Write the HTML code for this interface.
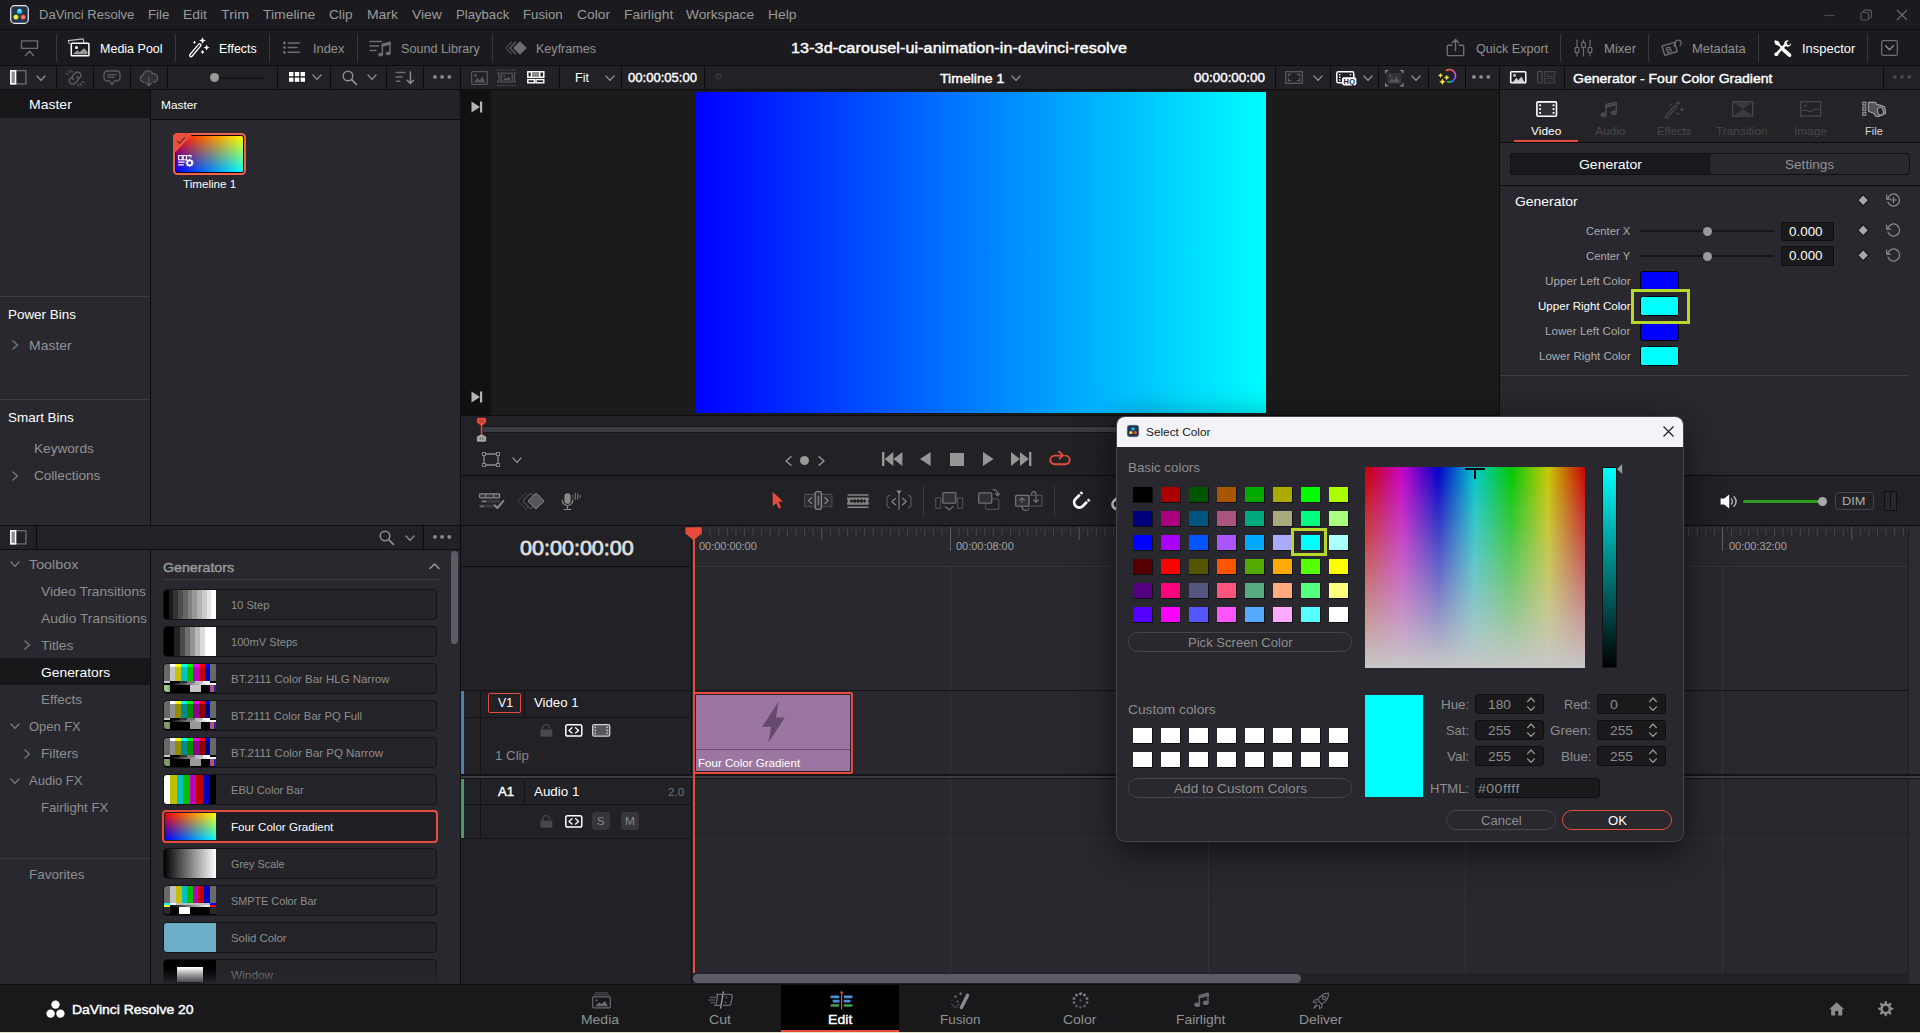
<!DOCTYPE html>
<html lang="en"><head><meta charset="utf-8"><title>DaVinci Resolve - Select Color</title>
<style>
html,body{margin:0;padding:0;background:#28282e;overflow:hidden}
#app{position:relative;width:1920px;height:1033px;overflow:hidden;background:#28282e;font-family:"Liberation Sans", sans-serif;}
#app div,#app svg{position:absolute}
#app svg{overflow:visible}
.t{white-space:pre}
</style></head><body><div id="app">
<div style="left:0px;top:0px;width:1920px;height:30px;background:#1b1b1f;"></div>
<div style="left:0px;top:29px;width:1920px;height:1px;background:#0d0d0f;"></div>
<div style="left:0px;top:30px;width:1920px;height:36px;background:#1b1b1f;"></div>
<div style="left:0px;top:65px;width:1920px;height:1px;background:#0d0d0f;"></div>
<div style="left:0px;top:66px;width:1920px;height:24px;background:#212126;"></div>
<div style="left:0px;top:89px;width:1920px;height:1px;background:#0d0d0f;"></div>
<div style="left:0px;top:90px;width:150px;height:436px;background:#28282e;"></div>
<div style="left:0px;top:90px;width:150px;height:28px;background:#17171a;"></div>
<div style="left:150px;top:90px;width:1px;height:436px;background:#0d0d0f;"></div>
<div style="left:151px;top:90px;width:309px;height:29px;background:#222227;"></div>
<div style="left:151px;top:119px;width:309px;height:1px;background:#0d0d0f;"></div>
<div style="left:151px;top:120px;width:309px;height:406px;background:#28282e;"></div>
<div style="left:0px;top:296px;width:150px;height:1px;background:#3c3c44;"></div>
<div style="left:0px;top:399px;width:150px;height:1px;background:#3c3c44;"></div>
<div style="left:460px;top:66px;width:1px;height:918px;background:#0d0d0f;"></div>
<div style="left:461px;top:90px;width:1038px;height:326px;background:#1b1b1c;"></div>
<div style="left:461px;top:90px;width:30px;height:326px;background:#111112;"></div>
<div style="left:695px;top:92px;width:571px;height:321px;background:linear-gradient(90deg,#0000ff 0%,#00ffff 100%);"></div>
<div style="left:461px;top:416px;width:1038px;height:60px;background:#212126;"></div>
<div style="left:461px;top:415px;width:1038px;height:1px;background:#0d0d0f;"></div>
<div style="left:461px;top:475px;width:1459px;height:1px;background:#0d0d0f;"></div>
<div style="left:1499px;top:66px;width:1px;height:410px;background:#0d0d0f;"></div>
<div style="left:1500px;top:90px;width:420px;height:385px;background:#28282e;"></div>
<div style="left:1500px;top:142px;width:420px;height:1px;background:#0d0d0f;"></div>
<div style="left:1500px;top:185px;width:420px;height:1px;background:#0d0d0f;"></div>
<div style="left:1500px;top:375px;width:409px;height:1px;background:#3c3c44;"></div>
<div style="left:461px;top:476px;width:1459px;height:50px;background:#212126;"></div>
<div style="left:461px;top:525px;width:1459px;height:1px;background:#0d0d0f;"></div>
<div style="left:0px;top:525px;width:460px;height:1px;background:#0d0d0f;"></div>
<div style="left:0px;top:526px;width:460px;height:23px;background:#212126;"></div>
<div style="left:0px;top:549px;width:460px;height:1px;background:#0d0d0f;"></div>
<div style="left:0px;top:550px;width:150px;height:434px;background:#28282e;"></div>
<div style="left:150px;top:550px;width:1px;height:434px;background:#0d0d0f;"></div>
<div style="left:151px;top:550px;width:309px;height:434px;background:#28282e;"></div>
<div style="left:0px;top:658px;width:150px;height:27px;background:#17171a;"></div>
<div style="left:0px;top:858px;width:150px;height:1px;background:#3c3c44;"></div>
<div style="left:461px;top:526px;width:1459px;height:458px;background:#28282e;"></div>
<div style="left:461px;top:526px;width:231px;height:458px;background:#212126;"></div>
<div style="left:691px;top:526px;width:1px;height:458px;background:#0d0d0f;"></div>
<svg style="left:10px;top:5px;" width="19" height="19" viewBox="0 0 20 20"><rect x="0.75" y="0.75" width="18.5" height="18.5" rx="4" fill="#22344d" stroke="#e8e8e8" stroke-width="1.3"/>
<circle cx="10" cy="6.6" r="2.7" fill="#19c3f2"/><circle cx="10" cy="5.6" r="1.5" fill="#7fe6ff"/>
<circle cx="6.3" cy="12.6" r="2.7" fill="#d9d62a"/><circle cx="5.8" cy="12.9" r="1.5" fill="#f4f05c"/>
<circle cx="13.7" cy="12.6" r="2.7" fill="#e8473a"/><circle cx="14.2" cy="12.9" r="1.5" fill="#ff8b7d"/></svg>
<svg style="left:1824px;top:9px;" width="12" height="12" viewBox="0 0 12 12"><path d="M0.5 6.5H10.5" stroke="#4a4a50" stroke-width="1.2" fill="none"/></svg>
<svg style="left:1860px;top:9px;" width="12" height="12" viewBox="0 0 12 12"><rect x="1" y="3.5" width="7.5" height="7.5" rx="1.5" fill="none" stroke="#55555b" stroke-width="1.2"/><path d="M3.5 3.2V2.6a1.5 1.5 0 0 1 1.5-1.5H9.9a1.5 1.5 0 0 1 1.5 1.5V7.5a1.5 1.5 0 0 1-1.5 1.5H9" fill="none" stroke="#55555b" stroke-width="1.2"/></svg>
<svg style="left:1896px;top:9px;" width="12" height="12" viewBox="0 0 12 12"><path d="M1 1L11 11M11 1L1 11" stroke="#6a6a70" stroke-width="1.2" fill="none"/></svg>
<div style="left:56px;top:34px;width:1px;height:28px;background:#37373d;"></div>
<div style="left:175px;top:34px;width:1px;height:28px;background:#37373d;"></div>
<div style="left:269px;top:34px;width:1px;height:28px;background:#37373d;"></div>
<div style="left:357px;top:34px;width:1px;height:28px;background:#37373d;"></div>
<div style="left:492px;top:34px;width:1px;height:28px;background:#37373d;"></div>
<div style="left:1560px;top:34px;width:1px;height:28px;background:#37373d;"></div>
<div style="left:1648px;top:34px;width:1px;height:28px;background:#37373d;"></div>
<div style="left:1758px;top:34px;width:1px;height:28px;background:#37373d;"></div>
<div style="left:1867px;top:34px;width:1px;height:28px;background:#37373d;"></div>
<div style="left:56px;top:66px;width:1px;height:23px;background:#0d0d0f;"></div>
<div style="left:93px;top:66px;width:1px;height:23px;background:#0d0d0f;"></div>
<div style="left:130px;top:66px;width:1px;height:23px;background:#0d0d0f;"></div>
<div style="left:167px;top:66px;width:1px;height:23px;background:#0d0d0f;"></div>
<div style="left:277px;top:66px;width:1px;height:23px;background:#0d0d0f;"></div>
<div style="left:330px;top:66px;width:1px;height:23px;background:#0d0d0f;"></div>
<div style="left:386px;top:66px;width:1px;height:23px;background:#0d0d0f;"></div>
<div style="left:423px;top:66px;width:1px;height:23px;background:#0d0d0f;"></div>
<div style="left:559px;top:66px;width:1px;height:23px;background:#0d0d0f;"></div>
<div style="left:621px;top:66px;width:1px;height:23px;background:#0d0d0f;"></div>
<div style="left:704px;top:66px;width:1px;height:23px;background:#0d0d0f;"></div>
<div style="left:1330px;top:66px;width:1px;height:23px;background:#0d0d0f;"></div>
<div style="left:1378px;top:66px;width:1px;height:23px;background:#0d0d0f;"></div>
<div style="left:1428px;top:66px;width:1px;height:23px;background:#0d0d0f;"></div>
<div style="left:1465px;top:66px;width:1px;height:23px;background:#0d0d0f;"></div>
<div style="left:1564px;top:66px;width:1px;height:23px;background:#0d0d0f;"></div>
<div style="left:1883px;top:66px;width:1px;height:23px;background:#0d0d0f;"></div>
<svg style="left:20px;top:39px;" width="20" height="18" viewBox="0 0 20 18"><path d="M1.5 1.8H17.5V9.3H1.5Z" stroke="#6e6e6e" stroke-width="1.3" fill="none" stroke-linecap="round" stroke-linejoin="round" /><path d="M5.5 16.5L9.5 12.3L13.5 16.5" stroke="#6e6e6e" stroke-width="1.5" fill="none" stroke-linecap="round" stroke-linejoin="round" /></svg>
<svg style="left:67px;top:38px;" width="24" height="19" viewBox="0 0 24 19"><path d="M2.2 5.6L1.3 2.6L16.2 0.9L16.9 4.4" stroke="#bdbdbd" stroke-width="1.1" fill="none" stroke-linecap="round" stroke-linejoin="round" /><rect x="4.3" y="5.3" width="17.6" height="12.4" rx="0.8" fill="#1b1b1f" stroke="#ffffff" stroke-width="1.5"/><circle cx="9.5" cy="9.4" r="1.5" fill="#ffffff"/><path d="M6 16.2L10.2 12.3L12.6 14.2L17 10.2L20.4 13.4V16.2Z" fill="#9a9a9a"/></svg>
<svg style="left:188px;top:37px;" width="22" height="22" viewBox="0 0 22 22"><path d="M3 18.4L11.6 8.2" stroke="#ffffff" stroke-width="4" stroke-linecap="round"/><path d="M3 18.4L11.6 8.2" stroke="#1b1b1f" stroke-width="1.4" stroke-linecap="round"/><path d="M14.5 0.20000000000000018L15.52 2.58L17.9 3.6L15.52 4.62L14.5 7.0L13.48 4.62L11.1 3.6L13.48 2.58Z" fill="#ffffff"/><path d="M18.6 7.6L19.5 9.7L21.6 10.6L19.5 11.5L18.6 13.6L17.700000000000003 11.5L15.600000000000001 10.6L17.700000000000003 9.7Z" fill="#ffffff"/><path d="M6.5 3.4L7.07 4.7299999999999995L8.4 5.3L7.07 5.87L6.5 7.199999999999999L5.93 5.87L4.6 5.3L5.93 4.7299999999999995Z" fill="#ffffff"/><path d="M14.5 12.8L15.16 14.34L16.7 15.0L15.16 15.66L14.5 17.2L13.84 15.66L12.3 15.0L13.84 14.34Z" fill="#ffffff"/></svg>
<svg style="left:282px;top:40px;" width="20" height="16" viewBox="0 0 20 16"><circle cx="2.4" cy="3" r="1.4" fill="#6e6e6e"/><circle cx="2.4" cy="7.6" r="1.4" fill="#6e6e6e"/><circle cx="2.4" cy="12.3" r="1.4" fill="#6e6e6e"/><path d="M6.2 3H17.6M6.2 7.6H14.8M6.2 12.3H17.6" stroke="#6e6e6e" stroke-width="1.5" fill="none" stroke-linecap="round" stroke-linejoin="round" /></svg>
<svg style="left:369px;top:39px;" width="24" height="19" viewBox="0 0 24 19"><path d="M1 2.4H12.4M1 7H9.6M1 11.5H7" stroke="#6e6e6e" stroke-width="1.5" fill="none" stroke-linecap="round" stroke-linejoin="round" /><ellipse cx="11.6" cy="15.6" rx="2.4" ry="1.9" fill="#6e6e6e"/><ellipse cx="19.2" cy="14.3" rx="2.4" ry="1.9" fill="#6e6e6e"/><path d="M13.4 15.4V5.2L21 3.2V14" stroke="#6e6e6e" stroke-width="1.5" fill="none" stroke-linecap="round" stroke-linejoin="round" /><path d="M13.4 6.6L21 4.6" stroke="#6e6e6e" stroke-width="2.2" fill="none" stroke-linecap="round" stroke-linejoin="round" /></svg>
<svg style="left:503px;top:40px;" width="26" height="16" viewBox="0 0 26 16"><path d="M8.5 2.2L3 8L8.5 13.8" stroke="#45454a" stroke-width="1.4" fill="none" stroke-linecap="round" stroke-linejoin="round" /><path d="M12.5 2.2L7 8L12.5 13.8" stroke="#5a5a5f" stroke-width="1.4" fill="none" stroke-linecap="round" stroke-linejoin="round" /><path d="M17 1.2L23.8 8L17 14.8L10.2 8Z" fill="#6e6e6e"/></svg>
<svg style="left:1446px;top:38px;" width="20" height="19" viewBox="0 0 20 19"><path d="M6 7.2H2.3a1 1 0 0 0-1 1V16.6a1 1 0 0 0 1 1H16.7a1 1 0 0 0 1-1V8.2a1 1 0 0 0-1-1H13" stroke="#6e6e6e" stroke-width="1.4" fill="none" stroke-linecap="round" stroke-linejoin="round" /><path d="M9.5 12.5V2M6.3 4.8L9.5 1.4L12.7 4.8" stroke="#6e6e6e" stroke-width="1.4" fill="none" stroke-linecap="round" stroke-linejoin="round" /></svg>
<svg style="left:1574px;top:39px;" width="19" height="18" viewBox="0 0 19 18"><path d="M3 1V17" stroke="#6e6e6e" stroke-width="1.2" fill="none" stroke-linecap="round" stroke-linejoin="round" /><path d="M9.5 1V17" stroke="#6e6e6e" stroke-width="1.2" fill="none" stroke-linecap="round" stroke-linejoin="round" /><path d="M16 1V17" stroke="#6e6e6e" stroke-width="1.2" fill="none" stroke-linecap="round" stroke-linejoin="round" /><rect x="1.2" y="8.5" width="3.6" height="5" rx="0.6" fill="#1b1b1f" stroke="#6e6e6e" stroke-width="1.2"/><rect x="7.7" y="3.5" width="3.6" height="5" rx="0.6" fill="#1b1b1f" stroke="#6e6e6e" stroke-width="1.2"/><rect x="14.2" y="8.5" width="3.6" height="5" rx="0.6" fill="#1b1b1f" stroke="#6e6e6e" stroke-width="1.2"/></svg>
<svg style="left:1661px;top:39px;" width="22" height="18" viewBox="0 0 22 18"><path d="M1 7.2L13.5 3.4L16.3 12.5L3.8 16.4Z" stroke="#6e6e6e" stroke-width="1.4" fill="none" stroke-linecap="round" stroke-linejoin="round" /><text x="4.8" y="13.6" font-size="8.5" font-weight="700" fill="#6e6e6e" transform="rotate(-17 8 11)" font-family="Liberation Sans, sans-serif">B</text><path d="M14.5 6.5C13 3.5 15 1 17.6 1.2S21.3 4.6 19 6.6" stroke="#6e6e6e" stroke-width="1.3" fill="none" stroke-linecap="round" stroke-linejoin="round" /><circle cx="13.6" cy="6.6" r="1.2" fill="#6e6e6e"/></svg>
<svg style="left:1773px;top:39px;" width="19" height="18" viewBox="0 0 19 18"><path d="M2.2 1.2L5.8 2.4L7 5.4L10.6 8.6L9 10.2L5.6 6.8L2.6 5.8L1.2 2.2Z" fill="#fff"/><path d="M10.2 10.6L16.6 16.2" stroke="#fff" stroke-width="3.6" stroke-linecap="round"/><path d="M3 15.6L12.4 5.6" stroke="#fff" stroke-width="2.6" stroke-linecap="round"/><path d="M11.2 4.2a3.6 3.6 0 0 1 4.6-2.9L13.6 3.6L14.2 5.6L16.2 6.2L18.2 4a3.6 3.6 0 0 1-4.6 3.6Z" fill="#fff"/><circle cx="3.4" cy="15.2" r="1.9" fill="#fff"/></svg>
<svg style="left:1881px;top:40px;" width="17" height="16" viewBox="0 0 17 16"><rect x="0.7" y="0.7" width="15.6" height="14.6" rx="1.5" fill="none" stroke="#6e6e6e" stroke-width="1.3"/><path d="M4.6 5.8L8.5 9.8L12.4 5.8" stroke="#8c8c8c" stroke-width="1.4" fill="none" stroke-linecap="round" stroke-linejoin="round" /></svg>
<svg style="left:10px;top:70px;" width="17" height="15" viewBox="0 0 17 15"><rect x="0.7" y="0.7" width="15.2" height="13.2" fill="none" stroke="#6e6e6e" stroke-width="1.3"/><rect x="0.8" y="0.8" width="4.8" height="13" fill="#8a8a8a" stroke="#ffffff" stroke-width="1.5"/></svg>
<svg style="left:37.3px;top:75.8px;" width="8" height="4.4" viewBox="0 0 8 4.4"><path d="M0 0L4.0 4.4L8 0" stroke="#8c8c8c" stroke-width="1.4" fill="none" stroke-linecap="round" stroke-linejoin="round" /></svg>
<svg style="left:65px;top:69px;" width="21" height="18" viewBox="0 0 21 18"><path d="M8.2 10.6a3.3 3.3 0 0 1 0-4.6L10.3 3.9a3.3 3.3 0 0 1 4.7 4.6L13.8 9.8" stroke="#5c5c60" stroke-width="1.4" fill="none" stroke-linecap="round" stroke-linejoin="round" /><path d="M12 7.6a3.3 3.3 0 0 1 0 4.6L9.9 14.3a3.3 3.3 0 0 1-4.7-4.6L6.4 8.4" stroke="#5c5c60" stroke-width="1.4" fill="none" stroke-linecap="round" stroke-linejoin="round" /><path d="M3.6 1.6L5 3.4M1.2 4.6L3.4 5.2M6.8 1L7 3M16.6 16.4L15.2 14.6M19 13.4L16.8 12.8M13.4 17L13.2 15" stroke="#5c5c60" stroke-width="1.1" fill="none" stroke-linecap="round" stroke-linejoin="round" /></svg>
<svg style="left:103px;top:70px;" width="18" height="17" viewBox="0 0 18 17"><path d="M4.4 1H13.6a3.4 3.4 0 0 1 3.4 3.4V7.6a3.4 3.4 0 0 1-3.4 3.4H11.4L9 14.8L6.6 11H4.4A3.4 3.4 0 0 1 1 7.6V4.4A3.4 3.4 0 0 1 4.4 1Z" stroke="#5c5c60" stroke-width="1.3" fill="none" stroke-linecap="round" stroke-linejoin="round" /><path d="M4.6 4.6H13.4M4.6 7.2H11" stroke="#5c5c60" stroke-width="1.2" fill="none" stroke-linecap="round" stroke-linejoin="round" /></svg>
<svg style="left:139px;top:69px;" width="20" height="18" viewBox="0 0 20 18"><path d="M5 13.2H4.6a3.6 3.6 0 0 1-.4-7.1A5 5 0 0 1 13.6 4.6a4.3 4.3 0 0 1 1.8 8.4H14.6" stroke="#5c5c60" stroke-width="1.3" fill="#303035" stroke-linecap="round" stroke-linejoin="round" /><path d="M9.8 8V16.4M6.9 13.8L9.8 16.8L12.7 13.8" stroke="#5c5c60" stroke-width="1.3" fill="none" stroke-linecap="round" stroke-linejoin="round" /></svg>
<div style="left:218px;top:77px;width:47px;height:2px;background:#151518;"></div>
<div style="left:209.8px;top:73.2px;width:9px;height:9px;background:#9a9a9a;border-radius:5px;"></div>
<svg style="left:289px;top:72px;" width="16" height="10" viewBox="0 0 16 10"><rect x="0.0" y="0.0" width="4.4" height="4.2" fill="#fff"/><rect x="0.0" y="5.6" width="4.4" height="4.2" fill="#fff"/><rect x="5.8" y="0.0" width="4.4" height="4.2" fill="#fff"/><rect x="5.8" y="5.6" width="4.4" height="4.2" fill="#fff"/><rect x="11.6" y="0.0" width="4.4" height="4.2" fill="#fff"/><rect x="11.6" y="5.6" width="4.4" height="4.2" fill="#fff"/></svg>
<svg style="left:312.8px;top:75.39999999999999px;" width="8" height="4.4" viewBox="0 0 8 4.4"><path d="M0 0L4.0 4.4L8 0" stroke="#8c8c8c" stroke-width="1.4" fill="none" stroke-linecap="round" stroke-linejoin="round" /></svg>
<svg style="left:341.5px;top:70px;" width="16" height="16" viewBox="0 0 16 16"><circle cx="6" cy="6" r="4.8" fill="none" stroke="#8c8c8c" stroke-width="1.5"/><path d="M9.6 9.6L14.4 14.4" stroke="#8c8c8c" stroke-width="1.9" fill="none" stroke-linecap="round" stroke-linejoin="round" /></svg>
<svg style="left:368.4px;top:75.39999999999999px;" width="8" height="4.4" viewBox="0 0 8 4.4"><path d="M0 0L4.0 4.4L8 0" stroke="#8c8c8c" stroke-width="1.4" fill="none" stroke-linecap="round" stroke-linejoin="round" /></svg>
<svg style="left:395px;top:71px;" width="20" height="14" viewBox="0 0 20 14"><path d="M1.2 1.6H10M1.2 6H7.4M1.2 10.2H4.8" stroke="#6e6e6e" stroke-width="1.5" fill="none" stroke-linecap="round" stroke-linejoin="round" /><path d="M15.4 1V12.4M12.2 9.2L15.4 12.6L18.6 9.2" stroke="#8c8c8c" stroke-width="1.5" fill="none" stroke-linecap="round" stroke-linejoin="round" /></svg>
<svg style="left:432.70000000000005px;top:75.3px;" width="18.2" height="3.8" viewBox="0 0 18.2 3.8"><circle cx="1.9" cy="1.9" r="1.9" fill="#8c8c8c"/><circle cx="9.1" cy="1.9" r="1.9" fill="#8c8c8c"/><circle cx="16.3" cy="1.9" r="1.9" fill="#8c8c8c"/></svg>
<svg style="left:12.8px;top:341.3px;" width="4.4" height="8" viewBox="0 0 4.4 8"><path d="M0 0L4.4 4.0L0 8" stroke="#77777c" stroke-width="1.4" fill="none" stroke-linecap="round" stroke-linejoin="round" /></svg>
<svg style="left:12.8px;top:471.5px;" width="4.4" height="8" viewBox="0 0 4.4 8"><path d="M0 0L4.4 4.0L0 8" stroke="#77777c" stroke-width="1.4" fill="none" stroke-linecap="round" stroke-linejoin="round" /></svg>
<div style="left:173px;top:133px;width:73px;height:42px;background:#f5614d;border-radius:4.5px;"></div>
<div style="left:175px;top:135px;width:69px;height:38px;background:#0a0a0a;border-radius:2.5px;"></div>
<div style="left:176px;top:136px;width:67px;height:36px;background:linear-gradient(90deg,#000000,#00ff00),linear-gradient(180deg,#ff0000,#0000ff);border-radius:1.5px;background-blend-mode:screen;"></div>
<svg style="left:173px;top:133px;" width="22" height="21" viewBox="0 0 22 21"><path d="M0 4.5a4.5 4.5 0 0 1 4.5-4.5H20.6L2 19.4H0Z" fill="#e9503f"/><path d="M2 2H18.6L2 19.4Z" fill="#e9503f"/><path d="M4.4 8.2L6.6 10.4L11.6 4.6" stroke="#7a2a22" stroke-width="1.3" fill="none" stroke-linecap="round" stroke-linejoin="round" /></svg>
<svg style="left:177.5px;top:154.6px;" width="17" height="12" viewBox="0 0 17 12"><rect x="0.6" y="0.6" width="3.6" height="4.2" fill="none" stroke="#fff" stroke-width="1.1"/><rect x="5.2" y="0.6" width="3.4" height="4.2" fill="none" stroke="#fff" stroke-width="1.1"/><path d="M9.4 0.6H13V2.4" fill="none" stroke="#fff" stroke-width="1.1"/><path d="M0.2 7.2H6.6M0.2 9.8H5.8" stroke="#fff" stroke-width="1.3"/><circle cx="11.6" cy="7.8" r="2.5" fill="none" stroke="#fff" stroke-width="1.8"/><path d="M11.6 3.8V5M11.6 10.6V11.8M7.6 7.8H8.8M14.4 7.8H15.6M8.8 5L9.7 5.9M13.5 9.7L14.4 10.6M8.8 10.6L9.7 9.7M13.5 5.9L14.4 5" stroke="#fff" stroke-width="1.3"/></svg>
<svg style="left:10px;top:530px;" width="17" height="15" viewBox="0 0 17 15"><rect x="0.7" y="0.7" width="15.2" height="13.2" fill="none" stroke="#6e6e6e" stroke-width="1.3"/><rect x="0.8" y="0.8" width="4.8" height="13" fill="#8a8a8a" stroke="#ffffff" stroke-width="1.5"/></svg>
<div style="left:36px;top:526px;width:1px;height:23px;background:#0d0d0f;"></div>
<svg style="left:378.5px;top:529.5px;" width="16" height="16" viewBox="0 0 16 16"><circle cx="6" cy="6" r="4.8" fill="none" stroke="#8c8c8c" stroke-width="1.5"/><path d="M9.6 9.6L14.4 14.4" stroke="#8c8c8c" stroke-width="1.9" fill="none" stroke-linecap="round" stroke-linejoin="round" /></svg>
<svg style="left:405.5px;top:535.8px;" width="8" height="4.4" viewBox="0 0 8 4.4"><path d="M0 0L4.0 4.4L8 0" stroke="#8c8c8c" stroke-width="1.4" fill="none" stroke-linecap="round" stroke-linejoin="round" /></svg>
<div style="left:423px;top:526px;width:1px;height:23px;background:#0d0d0f;"></div>
<svg style="left:432.70000000000005px;top:535.1px;" width="18.2" height="3.8" viewBox="0 0 18.2 3.8"><circle cx="1.9" cy="1.9" r="1.9" fill="#8c8c8c"/><circle cx="9.1" cy="1.9" r="1.9" fill="#8c8c8c"/><circle cx="16.3" cy="1.9" r="1.9" fill="#8c8c8c"/></svg>
<svg style="left:10.5px;top:562.4px;" width="8" height="4.4" viewBox="0 0 8 4.4"><path d="M0 0L4.0 4.4L8 0" stroke="#77777c" stroke-width="1.4" fill="none" stroke-linecap="round" stroke-linejoin="round" /></svg>
<svg style="left:24.8px;top:641.4px;" width="4.4" height="8" viewBox="0 0 4.4 8"><path d="M0 0L4.4 4.0L0 8" stroke="#77777c" stroke-width="1.4" fill="none" stroke-linecap="round" stroke-linejoin="round" /></svg>
<svg style="left:10.5px;top:724.4px;" width="8" height="4.4" viewBox="0 0 8 4.4"><path d="M0 0L4.0 4.4L8 0" stroke="#77777c" stroke-width="1.4" fill="none" stroke-linecap="round" stroke-linejoin="round" /></svg>
<svg style="left:24.8px;top:749.5px;" width="4.4" height="8" viewBox="0 0 4.4 8"><path d="M0 0L4.4 4.0L0 8" stroke="#77777c" stroke-width="1.4" fill="none" stroke-linecap="round" stroke-linejoin="round" /></svg>
<svg style="left:10.5px;top:778.5px;" width="8" height="4.4" viewBox="0 0 8 4.4"><path d="M0 0L4.0 4.4L8 0" stroke="#77777c" stroke-width="1.4" fill="none" stroke-linecap="round" stroke-linejoin="round" /></svg>
<svg style="left:430.1px;top:564.2px;" width="9" height="4.6" viewBox="0 0 9 4.6"><path d="M0 4.6L4.5 0L9 4.6" stroke="#9a9a9a" stroke-width="1.4" fill="none" stroke-linecap="round" stroke-linejoin="round" /></svg>
<div style="left:163px;top:579px;width:277px;height:1px;background:#3a3a41;"></div>
<div style="left:163px;top:589px;width:274px;height:30.6px;background:#232328;border:1px solid #141417;box-sizing:border-box;border-radius:4px;"></div>
<div style="left:164px;top:590px;width:52px;height:28.6px;background:linear-gradient(90deg,#000 0.00% 9.09%,#1a1a1a 9.09% 18.18%,#333 18.18% 27.27%,#4d4d4d 27.27% 36.36%,#666 36.36% 45.45%,#808080 45.45% 54.55%,#999 54.55% 63.64%,#b3b3b3 63.64% 72.73%,#ccc 72.73% 81.82%,#e6e6e6 81.82% 90.91%,#fff 90.91% 100.00%);border-radius:3px 0 0 3px;"></div>
<div style="left:163px;top:626px;width:274px;height:30.6px;background:#232328;border:1px solid #141417;box-sizing:border-box;border-radius:4px;"></div>
<div style="left:164px;top:627px;width:52px;height:28.6px;background:linear-gradient(90deg,#000 0% 20%,#222 20% 30%,#4a4a4a 30% 40%,#6e6e6e 40% 50%,#939393 50% 60%,#b8b8b8 60% 70%,#dcdcdc 70% 78%,#fff 78% 100%);border-radius:3px 0 0 3px;"></div>
<div style="left:163px;top:663px;width:274px;height:30.6px;background:#232328;border:1px solid #141417;box-sizing:border-box;border-radius:4px;"></div>
<div style="left:164px;top:664px;width:52px;height:28.6px;background:#000;border-radius:3px 0 0 3px;"></div>
<div style="left:164px;top:664px;width:52px;height:3px;background:linear-gradient(90deg,#686868 0% 10.7%,#ffffff 10.7% 20.6%,#ffff00 20.6% 32.2%,#00ffff 32.2% 43.8%,#00ff00 43.8% 55.5%,#ff00ff 55.5% 66.7%,#ff0000 66.7% 78.3%,#0000ff 78.3% 88.1%,#686868 88.1% 100%);border-radius:3px 0 0 0;"></div>
<div style="left:164px;top:667px;width:52px;height:13.5px;background:linear-gradient(90deg,#686868 0% 10.7%,#c4c4c4 10.7% 20.6%,#c4c400 20.6% 32.2%,#00c4c4 32.2% 43.8%,#00c000 43.8% 55.5%,#c000c0 55.5% 66.7%,#c40000 66.7% 78.3%,#0000c4 78.3% 88.1%,#686868 88.1% 100%);"></div>
<div style="left:164px;top:680.5px;width:52px;height:2px;background:linear-gradient(90deg,#c8c8c8 0% 10.7%,#000 10.7% 30%,#333 30% 45%,#777 45% 60%,#bbb 60% 75%,#fff 75% 88.1%,#000 88.1% 100%);"></div>
<div style="left:164px;top:682.5px;width:52px;height:2.2px;background:linear-gradient(90deg,#000 0% 10.7%,#000 12%,#fff 86%,#fff 100%);"></div>
<div style="left:164px;top:684.7px;width:52px;height:7.3px;background:linear-gradient(90deg,#c8c040 0% 3.5%,#8ac0d8 3.5% 7%,#8ac040 7% 10.7%,#000 10.7% 50%,#c6c6c6 50% 71%,#000 71% 88.1%,#a848c0 88.1% 92%,#b86030 92% 96%,#2a20c0 96% 100%);border-radius:0 0 0 3px;"></div>
<div style="left:163px;top:700px;width:274px;height:30.6px;background:#232328;border:1px solid #141417;box-sizing:border-box;border-radius:4px;"></div>
<div style="left:164px;top:701px;width:52px;height:28.6px;background:#000;border-radius:3px 0 0 3px;"></div>
<div style="left:164px;top:701px;width:52px;height:3px;background:linear-gradient(90deg,#686868 0% 10.7%,#ffffff 10.7% 20.6%,#ffff00 20.6% 32.2%,#00ffff 32.2% 43.8%,#00ff00 43.8% 55.5%,#ff00ff 55.5% 66.7%,#ff0000 66.7% 78.3%,#0000ff 78.3% 88.1%,#686868 88.1% 100%);border-radius:3px 0 0 0;"></div>
<div style="left:164px;top:704px;width:52px;height:13.5px;background:linear-gradient(90deg,#686868 0% 10.7%,#909090 10.7% 20.6%,#948c00 20.6% 32.2%,#008c8c 32.2% 43.8%,#008c00 43.8% 55.5%,#8c008c 55.5% 66.7%,#8c0000 66.7% 78.3%,#00008c 78.3% 88.1%,#686868 88.1% 100%);"></div>
<div style="left:164px;top:717.5px;width:52px;height:2px;background:linear-gradient(90deg,#c8c8c8 0% 10.7%,#000 10.7% 30%,#333 30% 45%,#777 45% 60%,#bbb 60% 75%,#fff 75% 88.1%,#000 88.1% 100%);"></div>
<div style="left:164px;top:719.5px;width:52px;height:2.2px;background:linear-gradient(90deg,#000 0% 10.7%,#000 12%,#fff 86%,#fff 100%);"></div>
<div style="left:164px;top:721.7px;width:52px;height:7.3px;background:linear-gradient(90deg,#9a9440 0% 3.5%,#7a98a8 3.5% 7%,#7c9a48 7% 10.7%,#000 10.7% 50%,#9a9a9a 50% 71%,#000 71% 88.1%,#a848c0 88.1% 92%,#b86030 92% 96%,#2a20c0 96% 100%);border-radius:0 0 0 3px;"></div>
<div style="left:163px;top:737px;width:274px;height:30.6px;background:#232328;border:1px solid #141417;box-sizing:border-box;border-radius:4px;"></div>
<div style="left:164px;top:738px;width:52px;height:28.6px;background:#000;border-radius:3px 0 0 3px;"></div>
<div style="left:164px;top:738px;width:52px;height:3px;background:linear-gradient(90deg,#686868 0% 10.7%,#ffffff 10.7% 20.6%,#ffff00 20.6% 32.2%,#00ffff 32.2% 43.8%,#00ff00 43.8% 55.5%,#ff00ff 55.5% 66.7%,#ff0000 66.7% 78.3%,#0000ff 78.3% 88.1%,#686868 88.1% 100%);border-radius:3px 0 0 0;"></div>
<div style="left:164px;top:741px;width:52px;height:13.5px;background:linear-gradient(90deg,#686868 0% 10.7%,#909090 10.7% 20.6%,#948c00 20.6% 32.2%,#008c8c 32.2% 43.8%,#008c00 43.8% 55.5%,#8c008c 55.5% 66.7%,#8c0000 66.7% 78.3%,#00008c 78.3% 88.1%,#686868 88.1% 100%);"></div>
<div style="left:164px;top:754.5px;width:52px;height:2px;background:linear-gradient(90deg,#c8c8c8 0% 10.7%,#000 10.7% 30%,#333 30% 45%,#777 45% 60%,#bbb 60% 75%,#fff 75% 88.1%,#000 88.1% 100%);"></div>
<div style="left:164px;top:756.5px;width:52px;height:2.2px;background:linear-gradient(90deg,#000 0% 10.7%,#000 12%,#fff 86%,#fff 100%);"></div>
<div style="left:164px;top:758.7px;width:52px;height:7.3px;background:linear-gradient(90deg,#9a9440 0% 3.5%,#7a98a8 3.5% 7%,#7c9a48 7% 10.7%,#000 10.7% 50%,#9a9a9a 50% 71%,#000 71% 88.1%,#a848c0 88.1% 92%,#b86030 92% 96%,#2a20c0 96% 100%);border-radius:0 0 0 3px;"></div>
<div style="left:163px;top:774px;width:274px;height:30.6px;background:#232328;border:1px solid #141417;box-sizing:border-box;border-radius:4px;"></div>
<div style="left:164px;top:775px;width:52px;height:28.6px;background:linear-gradient(90deg,#fff 0.00% 12.50%,#c0c000 12.50% 25.00%,#00c0c0 25.00% 37.50%,#00c000 37.50% 50.00%,#c000c0 50.00% 62.50%,#c00000 62.50% 75.00%,#0000c0 75.00% 87.50%,#000 87.50% 100.00%);border-radius:3px 0 0 3px;"></div>
<div style="left:162px;top:810px;width:276px;height:32.5px;background:#1f1f24;border:2px solid #e64b3d;box-sizing:border-box;border-radius:4px;"></div>
<div style="left:165px;top:813px;width:51px;height:26.6px;background:linear-gradient(90deg,#000000,#00ff00),linear-gradient(180deg,#ff0000,#0000ff);border-radius:2px 0 0 2px;background-blend-mode:screen;"></div>
<div style="left:163px;top:848px;width:274px;height:30.6px;background:#232328;border:1px solid #141417;box-sizing:border-box;border-radius:4px;"></div>
<div style="left:164px;top:849px;width:52px;height:28.6px;background:linear-gradient(90deg,#000,#fff);border-radius:3px 0 0 3px;"></div>
<div style="left:163px;top:885px;width:274px;height:30.6px;background:#232328;border:1px solid #141417;box-sizing:border-box;border-radius:4px;"></div>
<div style="left:164px;top:886px;width:52px;height:28.6px;background:#050505;border-radius:3px 0 0 3px;"></div>
<div style="left:164px;top:886px;width:52px;height:17px;background:linear-gradient(90deg,#6a6a6a 0% 12%,#c0c0c0 12.0% 22.86%,#c0c000 22.86% 33.72%,#00c0c0 33.72% 44.58%,#00c000 44.58% 55.44%,#c000c0 55.44% 66.3%,#c00000 66.3% 77.16%,#0000c0 77.16% 88.02%,#6a6a6a 88% 100%);border-radius:3px 0 0 0;"></div>
<div style="left:164px;top:903px;width:52px;height:2px;background:linear-gradient(90deg,#00ffff 0% 12%,#fff 12% 24%,#bbb 24% 88%,#0000ff 88% 100%);"></div>
<div style="left:164px;top:905px;width:52px;height:2px;background:linear-gradient(90deg,#ffff00 0% 12%,#000 12%,#fff 88%,#ff0000 88% 100%);"></div>
<div style="left:164px;top:907px;width:52px;height:7px;background:linear-gradient(90deg,#2a2a2a 0% 12%,#050505 12% 28%,#fff 28% 50%,#050505 50% 88%,#2a2a2a 88% 100%);border-radius:0 0 0 3px;"></div>
<div style="left:163px;top:922px;width:274px;height:30.6px;background:#232328;border:1px solid #141417;box-sizing:border-box;border-radius:4px;"></div>
<div style="left:164px;top:923px;width:52px;height:28.6px;background:#6cadc8;border-radius:3px 0 0 3px;"></div>
<div style="left:163px;top:959px;width:274px;height:30.6px;background:#232328;border:1px solid #141417;box-sizing:border-box;border-radius:4px;"></div>
<div style="left:164px;top:960px;width:52px;height:28.6px;background:#000;border-radius:3px 0 0 3px;"></div>
<div style="left:177px;top:967px;width:26px;height:15px;background:linear-gradient(180deg,#fff,#ccc);"></div>
<div style="left:451px;top:551px;width:7px;height:93px;background:#5a5d66;border-radius:3.5px;"></div>
<div style="left:1275px;top:66px;width:1px;height:23px;background:#0d0d0f;"></div>
<svg style="left:471px;top:71px;" width="17" height="14" viewBox="0 0 17 14"><rect x="0.7" y="0.7" width="15.6" height="12.6" rx="0.8" fill="none" stroke="#55555a" stroke-width="1.3"/><circle cx="4.6" cy="4.4" r="1.4" fill="#55555a"/><path d="M2.6 11.6L6.4 6.8L8.4 9.2L11.4 5.4L14.6 11.6Z" fill="#55555a"/></svg>
<svg style="left:496px;top:69px;" width="22" height="18" viewBox="0 0 22 18"><path d="M1 1H20M1 16.5H20" stroke="#55555a" stroke-width="1.2" stroke-dasharray="1.6 1.4" fill="none"/><path d="M1 4.2H3V13H1M20 4.2H18.4V13H20" stroke="#55555a" stroke-width="1.2" fill="none"/><rect x="5.2" y="4.2" width="11" height="8.8" fill="none" stroke="#55555a" stroke-width="1.2"/><circle cx="8.2" cy="7" r="1" fill="#55555a"/><path d="M6.6 11.6L9.6 8.2L11 9.8L12.8 7.4L14.8 11.6Z" fill="#55555a"/></svg>
<svg style="left:526.5px;top:71px;" width="18" height="13" viewBox="0 0 18 13"><rect x="0.8" y="0.8" width="16" height="5.4" fill="none" stroke="#fff" stroke-width="1.5"/><rect x="4.4" y="1.4" width="8" height="4.2" fill="#8a8a8a"/><path d="M4.4 0.8V6.2M12.8 0.8V6.2" stroke="#fff" stroke-width="1.4"/><rect x="0.8" y="8.6" width="6.6" height="3.2" fill="none" stroke="#fff" stroke-width="1.4"/><rect x="9" y="8.6" width="7.8" height="3.2" fill="none" stroke="#fff" stroke-width="1.4"/></svg>
<svg style="left:605.5px;top:75.6px;" width="8" height="4.4" viewBox="0 0 8 4.4"><path d="M0 0L4.0 4.4L8 0" stroke="#8c8c8c" stroke-width="1.4" fill="none" stroke-linecap="round" stroke-linejoin="round" /></svg>
<svg style="left:714.5px;top:73px;" width="7" height="7" viewBox="0 0 7 7"><circle cx="3.5" cy="3.5" r="2.4" fill="none" stroke="#3c3c41" stroke-width="1.2"/></svg>
<svg style="left:1011.5px;top:76.39999999999999px;" width="8" height="4.4" viewBox="0 0 8 4.4"><path d="M0 0L4.0 4.4L8 0" stroke="#8c8c8c" stroke-width="1.4" fill="none" stroke-linecap="round" stroke-linejoin="round" /></svg>
<svg style="left:1285px;top:71px;" width="18" height="13" viewBox="0 0 18 13"><rect x="0.7" y="0.7" width="16.6" height="11.6" fill="none" stroke="#5a5a5f" stroke-width="1.3"/><path d="M3.4 5.4V3.4H5.8M12.2 3.4H14.6V5.4M14.6 7.6V9.6H12.2M5.8 9.6H3.4V7.6" stroke="#5a5a5f" stroke-width="1.2" fill="none" stroke-linecap="round" stroke-linejoin="round" /></svg>
<svg style="left:1313.5px;top:75.6px;" width="8" height="4.4" viewBox="0 0 8 4.4"><path d="M0 0L4.0 4.4L8 0" stroke="#8c8c8c" stroke-width="1.4" fill="none" stroke-linecap="round" stroke-linejoin="round" /></svg>
<svg style="left:1336px;top:70.5px;" width="21" height="15" viewBox="0 0 21 15"><rect x="0.8" y="0.8" width="17" height="11" rx="1.6" fill="none" stroke="#fff" stroke-width="1.5"/><path d="M3 3.6H4.4M3 6.3H4.4M3 9H4.4M13.8 3.6H15.2" stroke="#fff" stroke-width="1.4"/><rect x="6" y="6.2" width="14.4" height="8.2" rx="1.8" fill="#fff"/><text x="7.6" y="13" font-size="7.4" font-weight="700" fill="#212126" font-family="Liberation Sans, sans-serif" letter-spacing="0.3">HQ</text></svg>
<svg style="left:1363.5px;top:75.6px;" width="8" height="4.4" viewBox="0 0 8 4.4"><path d="M0 0L4.0 4.4L8 0" stroke="#8c8c8c" stroke-width="1.4" fill="none" stroke-linecap="round" stroke-linejoin="round" /></svg>
<svg style="left:1385px;top:69.5px;" width="19" height="17" viewBox="0 0 19 17"><rect x="2.2" y="3" width="14.2" height="10.6" fill="#333338"/><rect x="4.2" y="4.6" width="2" height="2" fill="#505055"/><path d="M3.4 12.4L7 8.2L8.8 10.2L11.2 6.6L15 12.4Z" fill="#55555a"/><path d="M0.7 3.3V0.7H3.3M15.3 0.7H17.9V3.3M17.9 13.3V15.9H15.3M3.3 15.9H0.7V13.3" stroke="#8a8a8a" stroke-width="1.3" fill="none"/></svg>
<svg style="left:1411.5px;top:75.6px;" width="8" height="4.4" viewBox="0 0 8 4.4"><path d="M0 0L4.0 4.4L8 0" stroke="#8c8c8c" stroke-width="1.4" fill="none" stroke-linecap="round" stroke-linejoin="round" /></svg>
<svg style="left:1437px;top:68px;" width="21" height="20" viewBox="0 0 21 20"><path d="M8.84 2.72A6.2 6.2 0 0 1 13.69 1.74" stroke="#f0642a" stroke-width="1.7" fill="none"/><path d="M13.48 1.69A6.2 6.2 0 0 1 17.60 4.42" stroke="#f04a8a" stroke-width="1.7" fill="none"/><path d="M17.48 4.24A6.2 6.2 0 0 1 18.46 9.09" stroke="#d850e0" stroke-width="1.7" fill="none"/><path d="M18.51 8.88A6.2 6.2 0 0 1 16.22 12.69" stroke="#7a5af0" stroke-width="1.7" fill="none"/><path d="M16.39 12.55A6.2 6.2 0 0 1 12.72 13.99" stroke="#2a9af0" stroke-width="1.7" fill="none"/><path d="M12.94 13.98A6.2 6.2 0 0 1 10.08 13.55" stroke="#2ac85a" stroke-width="1.7" fill="none"/><path d="M3.5 4.9L4.3 6.6000000000000005L6.0 7.4L4.3 8.200000000000001L3.5 9.9L2.7 8.200000000000001L1.0 7.4L2.7 6.6000000000000005Z" fill="#f2e440"/><path d="M9.7 6.7L10.596 8.604L12.5 9.5L10.596 10.396L9.7 12.3L8.803999999999998 10.396L6.8999999999999995 9.5L8.803999999999998 8.604Z" fill="#f2e440"/><path d="M5.4 10.5L6.456 12.744L8.7 13.8L6.456 14.856000000000002L5.4 17.1L4.344 14.856000000000002L2.1000000000000005 13.8L4.344 12.744Z" fill="#f2e440"/></svg>
<svg style="left:1471.8999999999999px;top:75.3px;" width="18.2" height="3.8" viewBox="0 0 18.2 3.8"><circle cx="1.9" cy="1.9" r="1.9" fill="#8c8c8c"/><circle cx="9.1" cy="1.9" r="1.9" fill="#8c8c8c"/><circle cx="16.3" cy="1.9" r="1.9" fill="#8c8c8c"/></svg>
<svg style="left:1510px;top:71px;" width="16.5" height="12.5" viewBox="0 0 16.5 12.5"><rect x="0.7" y="0.7" width="15.1" height="11.1" rx="0.8" fill="none" stroke="#ffffff" stroke-width="1.5"/><circle cx="4.6" cy="4.4" r="1.4" fill="#d0d0d0"/><path d="M2.6 11.6L6.4 6.8L8.4 9.2L11.4 5.4L14.6 11.6Z" fill="#d0d0d0"/></svg>
<svg style="left:1537px;top:71px;" width="19" height="13" viewBox="0 0 19 13"><rect x="0.6" y="0.6" width="4.4" height="11.4" rx="0.8" fill="none" stroke="#4a4a50" stroke-width="1.2"/><rect x="7.6" y="0.6" width="10.2" height="4.6" fill="none" stroke="#44444a" stroke-width="1.1"/><rect x="7.6" y="7.4" width="10.2" height="4.6" fill="none" stroke="#44444a" stroke-width="1.1"/><path d="M10 3H15.4M10 9.8H15.4" stroke="#44444a" stroke-width="1" stroke-dasharray="1.4 1"/></svg>
<svg style="left:1892.8999999999999px;top:75.3px;" width="18.2" height="3.8" viewBox="0 0 18.2 3.8"><circle cx="1.9" cy="1.9" r="1.9" fill="#47474c"/><circle cx="9.1" cy="1.9" r="1.9" fill="#47474c"/><circle cx="16.3" cy="1.9" r="1.9" fill="#47474c"/></svg>
<svg style="left:470.5px;top:101px;" width="12" height="12" viewBox="0 0 12 12"><path d="M0.5 0.5L9 6L0.5 11.5Z" fill="#b4b4b4"/><rect x="9" y="0.5" width="2.2" height="11" fill="#b4b4b4"/></svg>
<svg style="left:470.5px;top:391px;" width="12" height="12" viewBox="0 0 12 12"><path d="M0.5 0.5L9 6L0.5 11.5Z" fill="#b4b4b4"/><rect x="9" y="0.5" width="2.2" height="11" fill="#b4b4b4"/></svg>
<div style="left:483px;top:427px;width:1016px;height:5px;background:#3b3b42;"></div>
<div style="left:483px;top:426px;width:1016px;height:1px;background:#17171a;"></div>
<div style="left:483px;top:432px;width:1016px;height:1px;background:#17171a;"></div>
<svg style="left:476px;top:417px;" width="11" height="26" viewBox="0 0 11 26"><path d="M0.8 2.4a1.6 1.6 0 0 1 1.6-1.6H8.6a1.6 1.6 0 0 1 1.6 1.6V5.6L6.3 8.4H4.7L0.8 5.6Z" fill="#e64b3d" stroke="#141416" stroke-width="1" paint-order="stroke"/><rect x="4.75" y="8" width="1.5" height="9" fill="#e64b3d"/><path d="M4.2 2.6V5.4M6.8 2.6V5.4" stroke="#8d2a22" stroke-width="0.9"/><path d="M5.5 17L10.2 19.8V23.4a1.4 1.4 0 0 1-1.4 1.4H2.2A1.4 1.4 0 0 1 0.8 23.4V19.8Z" fill="#a8a8a8" stroke="#141416" stroke-width="1" paint-order="stroke"/><path d="M4.2 20.2V23M6.8 20.2V23" stroke="#55555a" stroke-width="0.9"/></svg>
<svg style="left:481.5px;top:452px;" width="18" height="15" viewBox="0 0 18 15"><path d="M2 2H16V13H2Z" stroke="#8c8c8c" stroke-width="1.3" fill="none" stroke-linecap="round" stroke-linejoin="round" /><rect x="0.5" y="0.5" width="3" height="3" fill="#212126" stroke="#8c8c8c" stroke-width="0.9"/><rect x="14.5" y="0.5" width="3" height="3" fill="#212126" stroke="#8c8c8c" stroke-width="0.9"/><rect x="0.5" y="11.5" width="3" height="3" fill="#212126" stroke="#8c8c8c" stroke-width="0.9"/><rect x="14.5" y="11.5" width="3" height="3" fill="#212126" stroke="#8c8c8c" stroke-width="0.9"/></svg>
<svg style="left:512.6px;top:458.0px;" width="8" height="4.4" viewBox="0 0 8 4.4"><path d="M0 0L4.0 4.4L8 0" stroke="#8c8c8c" stroke-width="1.4" fill="none" stroke-linecap="round" stroke-linejoin="round" /></svg>
<svg style="left:784.8px;top:455.6px;" width="7" height="10" viewBox="0 0 7 10"><path d="M6 0.8L1 5L6 9.2" stroke="#9a9a9a" stroke-width="1.4" fill="none" stroke-linecap="round" stroke-linejoin="round" /></svg>
<div style="left:800px;top:455.8px;width:9px;height:9px;background:#9a9a9a;border-radius:5px;"></div>
<svg style="left:817.6px;top:455.6px;" width="7" height="10" viewBox="0 0 7 10"><path d="M1 0.8L6 5L1 9.2" stroke="#9a9a9a" stroke-width="1.4" fill="none" stroke-linecap="round" stroke-linejoin="round" /></svg>
<svg style="left:882px;top:452px;" width="21" height="14" viewBox="0 0 21 14"><rect x="0" y="0" width="2.4" height="14" fill="#969696"/><path d="M11.4 0V14L2.6 7Z" fill="#969696"/><path d="M20.4 0V14L11.4 7Z" fill="#969696"/></svg>
<svg style="left:920px;top:452px;" width="11" height="14" viewBox="0 0 11 14"><path d="M10.6 0V14L0 7Z" fill="#969696"/></svg>
<div style="left:950px;top:452.5px;width:13.5px;height:13px;background:#969696;"></div>
<svg style="left:982.5px;top:452px;" width="11" height="14" viewBox="0 0 11 14"><path d="M0 0V14L10.6 7Z" fill="#969696"/></svg>
<svg style="left:1011px;top:452px;" width="21" height="14" viewBox="0 0 21 14"><path d="M0 0V14L9 7Z" fill="#969696"/><path d="M9 0V14L17.8 7Z" fill="#969696"/><rect x="18" y="0" width="2.4" height="14" fill="#969696"/></svg>
<svg style="left:1048.5px;top:449.7px;" width="22" height="16" viewBox="0 0 22 16"><path d="M13.4 5.6H5.6a4.3 4.3 0 0 0 0 8.6H16.4a4.3 4.3 0 0 0 0-8.6" stroke="#e64b3d" stroke-width="1.9" fill="none" stroke-linecap="round" stroke-linejoin="round" /><path d="M10.2 1.6L14 5.4L10.6 8.6" stroke="#e64b3d" stroke-width="1.9" fill="none" stroke-linecap="round" stroke-linejoin="round" /></svg>
<div style="left:1500px;top:90px;width:420px;height:52px;background:#232328;"></div>
<svg style="left:1536px;top:101px;" width="22" height="16.5" viewBox="0 0 22 16.5"><rect x="0.9" y="0.9" width="19.6" height="14.4" rx="1" fill="#303035" stroke="#fff" stroke-width="1.6"/><rect x="3.2" y="3.4" width="1.8" height="1.8" fill="#fff"/><rect x="3.2" y="7.2" width="1.8" height="1.8" fill="#fff"/><rect x="3.2" y="11" width="1.8" height="1.8" fill="#fff"/><rect x="16.6" y="3.4" width="1.8" height="1.8" fill="#fff"/><rect x="16.6" y="7.2" width="1.8" height="1.8" fill="#fff"/><rect x="16.6" y="11" width="1.8" height="1.8" fill="#fff"/></svg>
<div style="left:1514px;top:140px;width:64px;height:2px;background:#e64b3d;"></div>
<svg style="left:1600px;top:101px;" width="19" height="17" viewBox="0 0 19 17"><ellipse cx="3.6" cy="13.8" rx="3.1" ry="2.5" fill="#48484d"/><ellipse cx="13.8" cy="11.8" rx="3.1" ry="2.5" fill="#48484d"/><path d="M6 13.6V3.6L16.2 1.2V11.8" stroke="#48484d" stroke-width="1.5" fill="none" stroke-linecap="round" stroke-linejoin="round" /><path d="M6 5.6L16.2 3.2" stroke="#48484d" stroke-width="2.6" fill="none" stroke-linecap="round" stroke-linejoin="round" /></svg>
<svg style="left:1664px;top:99.5px;" width="22" height="20" viewBox="0 0 22 20"><path d="M2.4 17L11.4 6.6" stroke="#48484d" stroke-width="3.6" stroke-linecap="round"/><path d="M2.4 17L11.4 6.6" stroke="#232328" stroke-width="1.2" stroke-linecap="round"/><path d="M14 0.40000000000000036L14.896 2.3040000000000003L16.8 3.2L14.896 4.096L14 6.0L13.104 4.096L11.2 3.2L13.104 2.3040000000000003Z" fill="#48484d"/><path d="M18 7.0L18.768 8.632L20.4 9.4L18.768 10.168000000000001L18 11.8L17.232 10.168000000000001L15.6 9.4L17.232 8.632Z" fill="#48484d"/><path d="M6.6 3.0999999999999996L7.08 4.119999999999999L8.1 4.6L7.08 5.08L6.6 6.1L6.119999999999999 5.08L5.1 4.6L6.119999999999999 4.119999999999999Z" fill="#48484d"/><path d="M13.8 11.799999999999999L14.376000000000001 13.024L15.600000000000001 13.6L14.376000000000001 14.176L13.8 15.4L13.224 14.176L12.0 13.6L13.224 13.024Z" fill="#48484d"/></svg>
<svg style="left:1732px;top:101px;" width="22" height="16" viewBox="0 0 22 16"><rect x="0.7" y="0.7" width="20" height="14.4" fill="none" stroke="#48484d" stroke-width="1.3"/><path d="M1.4 1.4H20L10.7 7.9Z M1.4 14.4H20L10.7 7.9Z" fill="#3a3a3f"/></svg>
<svg style="left:1800px;top:101px;" width="22" height="16" viewBox="0 0 22 16"><rect x="0.7" y="0.7" width="20" height="14.4" fill="none" stroke="#48484d" stroke-width="1.3"/><circle cx="5.2" cy="4.6" r="1.2" fill="#48484d"/><path d="M2.4 9.6C5 8.4 6.4 9.2 8.4 10.2S12.4 10.4 14.4 8.4S17.4 9.4 19 8.8" stroke="#48484d" stroke-width="1.1" fill="none" stroke-linecap="round" stroke-linejoin="round" /></svg>
<svg style="left:1862px;top:100.5px;" width="25" height="17" viewBox="0 0 25 17"><rect x="0.8" y="1.2" width="3" height="3" fill="none" stroke="#a0a0a0" stroke-width="1.1"/><rect x="0.8" y="6.2" width="3" height="3" fill="none" stroke="#a0a0a0" stroke-width="1.1"/><rect x="0.8" y="11.2" width="3" height="3" fill="none" stroke="#a0a0a0" stroke-width="1.1"/><path d="M6.4 1.4L13.6 1.2L14.4 3.4L19.6 4.6L22.8 6L23.6 12.6L16.6 15.6L13.4 15L12.2 12.4L6.4 10.2Z" fill="#55555a" stroke="#a0a0a0" stroke-width="1.1" stroke-linejoin="round"/><ellipse cx="18.4" cy="10.2" rx="2.9" ry="3.9" fill="#232328" stroke="#a0a0a0" stroke-width="1.1" transform="rotate(-14 18.4 10.2)"/></svg>
<div style="left:1510px;top:152.5px;width:400px;height:22.5px;background:#28282e;border:1px solid #111113;box-sizing:border-box;border-radius:3px;"></div>
<div style="left:1510px;top:152.5px;width:199.5px;height:22.5px;background:#1a1a1e;border:1px solid #111113;box-sizing:border-box;border-radius:3px 0 0 3px;"></div>
<svg style="left:1856.6px;top:194.3px;" width="12.4" height="12.4" viewBox="0 0 12.4 12.4"><path d="M6.2 0L12.4 6.2L6.2 12.4L0 6.2Z" fill="#121214"/><path d="M6.2 1.5L10.9 6.2L6.2 10.9L1.5 6.2Z" fill="#a6a6aa"/></svg>
<svg style="left:1886.0px;top:192.4px;" width="15" height="16" viewBox="0 0 15 16"><path d="M1.7 6.9A6 6 0 1 1 2 10.2" stroke="#8a8a8a" stroke-width="1.25" fill="none" stroke-linecap="round" stroke-linejoin="round" /><path d="M0.7 3.1V7H4.6" stroke="#8a8a8a" stroke-width="1.25" fill="none" stroke-linecap="round" stroke-linejoin="round" /><path d="M7.6 5.6V10.4M5.2 8H10" stroke="#8a8a8a" stroke-width="1.15" fill="none" stroke-linecap="round" stroke-linejoin="round" /></svg>
<div style="left:1640px;top:230.3px;width:134px;height:2px;background:#17171a;"></div>
<div style="left:1702.8000000000002px;top:226.70000000000002px;width:9.2px;height:9.2px;background:#9a9a9a;border-radius:5px;"></div>
<div style="left:1780.5px;top:221.5px;width:53.5px;height:19.5px;background:#1a1a1c;border:1px solid #0e0e10;box-sizing:border-box;border-radius:2px;"></div>
<svg style="left:1856.6px;top:224.20000000000002px;" width="12.4" height="12.4" viewBox="0 0 12.4 12.4"><path d="M6.2 0L12.4 6.2L6.2 12.4L0 6.2Z" fill="#121214"/><path d="M6.2 1.5L10.9 6.2L6.2 10.9L1.5 6.2Z" fill="#a6a6aa"/></svg>
<svg style="left:1886.0px;top:222.4px;" width="15" height="16" viewBox="0 0 15 16"><path d="M1.7 6.9A6 6 0 1 1 2 10.2" stroke="#8a8a8a" stroke-width="1.25" fill="none" stroke-linecap="round" stroke-linejoin="round" /><path d="M0.7 3.1V7H4.6" stroke="#8a8a8a" stroke-width="1.25" fill="none" stroke-linecap="round" stroke-linejoin="round" /></svg>
<div style="left:1640px;top:255.2px;width:134px;height:2px;background:#17171a;"></div>
<div style="left:1702.8000000000002px;top:251.6px;width:9.2px;height:9.2px;background:#9a9a9a;border-radius:5px;"></div>
<div style="left:1780.5px;top:246.39999999999998px;width:53.5px;height:19.5px;background:#1a1a1c;border:1px solid #0e0e10;box-sizing:border-box;border-radius:2px;"></div>
<svg style="left:1856.6px;top:249.1px;" width="12.4" height="12.4" viewBox="0 0 12.4 12.4"><path d="M6.2 0L12.4 6.2L6.2 12.4L0 6.2Z" fill="#121214"/><path d="M6.2 1.5L10.9 6.2L6.2 10.9L1.5 6.2Z" fill="#a6a6aa"/></svg>
<svg style="left:1886.0px;top:247.29999999999998px;" width="15" height="16" viewBox="0 0 15 16"><path d="M1.7 6.9A6 6 0 1 1 2 10.2" stroke="#8a8a8a" stroke-width="1.25" fill="none" stroke-linecap="round" stroke-linejoin="round" /><path d="M0.7 3.1V7H4.6" stroke="#8a8a8a" stroke-width="1.25" fill="none" stroke-linecap="round" stroke-linejoin="round" /></svg>
<div style="left:1640px;top:271.4px;width:39.2px;height:19.8px;background:#0000ff;border:1px solid #050506;box-sizing:border-box;border-radius:2.5px;"></div>
<div style="left:1640px;top:296.4px;width:39.2px;height:19.8px;background:#00ffff;border:1px solid #050506;box-sizing:border-box;border-radius:2.5px;"></div>
<div style="left:1640px;top:321.3px;width:39.2px;height:19.8px;background:#0000ff;border:1px solid #050506;box-sizing:border-box;border-radius:2.5px;"></div>
<div style="left:1640px;top:346.3px;width:39.2px;height:19.8px;background:#00ffff;border:1px solid #050506;box-sizing:border-box;border-radius:2.5px;"></div>
<svg style="left:478px;top:492px;" width="27" height="18" viewBox="0 0 27 18"><rect x="1.6" y="1.8" width="20" height="4" rx="0.8" fill="#38383d" stroke="#8a8a8a" stroke-width="1.2"/><path d="M7.6 1.8V5.8M15.6 1.8V5.8" stroke="#8a8a8a" stroke-width="1.1"/><rect x="2.8" y="7.8" width="19.4" height="3.2" rx="0.6" fill="#38383d"/><rect x="1" y="12.6" width="14.8" height="3.2" rx="0.6" fill="#38383d"/><path d="M4.2 9.4H8M2.2 14.2H6" stroke="#8a8a8a" stroke-width="1.1"/><path d="M16.6 13.2L19.4 16L25.4 8.8" stroke="#8a8a8a" stroke-width="2" fill="none" stroke-linecap="round" stroke-linejoin="round" /></svg>
<svg style="left:517px;top:491px;" width="29" height="20" viewBox="0 0 29 20"><path d="M8.9 3.4000000000000004L15.5 10L8.9 16.6L2.3000000000000007 10Z" fill="#212126" stroke="#45454a" stroke-width="2.8" stroke-linejoin="round"/><path d="M8.9 3.4000000000000004L15.5 10L8.9 16.6L2.3000000000000007 10Z" fill="#212126" stroke="#212126" stroke-width="1.2000000000000002" stroke-linejoin="round"/><path d="M13.6 3.4000000000000004L20.2 10L13.6 16.6L7.0 10Z" fill="#212126" stroke="#66666b" stroke-width="2.8" stroke-linejoin="round"/><path d="M13.6 3.4000000000000004L20.2 10L13.6 16.6L7.0 10Z" fill="#212126" stroke="#212126" stroke-width="1.2000000000000002" stroke-linejoin="round"/><path d="M19 3.4000000000000004L25.6 10L19 16.6L12.4 10Z" fill="#55555a" stroke="#8a8a8a" stroke-width="2.8" stroke-linejoin="round"/><path d="M19 3.4000000000000004L25.6 10L19 16.6L12.4 10Z" fill="#55555a" stroke="#55555a" stroke-width="1.2000000000000002" stroke-linejoin="round"/></svg>
<svg style="left:561px;top:492px;" width="22" height="19" viewBox="0 0 22 19"><rect x="3.4" y="1.2" width="6.2" height="10.6" rx="3.1" fill="#8a8a8a"/><path d="M1.2 8.2a5.3 5.3 0 0 0 10.6 0M6.5 13.6V17.2M3.2 17.5H9.8" stroke="#8a8a8a" stroke-width="1.2" fill="none" stroke-linecap="round" stroke-linejoin="round" /><path d="M11.8 3.2V6.4" stroke="#55555a" stroke-width="1.1" fill="none" stroke-linecap="round" stroke-linejoin="round" /><path d="M14.3 1.2V7.6" stroke="#6a6a6f" stroke-width="1.3" fill="none" stroke-linecap="round" stroke-linejoin="round" /><path d="M16.7 1.8V7" stroke="#6a6a6f" stroke-width="1.3" fill="none" stroke-linecap="round" stroke-linejoin="round" /><path d="M19 3.6V5.4" stroke="#6a6a6f" stroke-width="1.3" fill="none" stroke-linecap="round" stroke-linejoin="round" /></svg>
<svg style="left:772.3px;top:490.7px;" width="12" height="19" viewBox="0 0 12 19"><path d="M0.6 0.8L11 10.6L6.6 11L9.2 16.6L6.8 17.8L4.2 12.2L0.8 15.2Z" fill="#e64b3d"/></svg>
<svg style="left:803.5px;top:491px;" width="29" height="19" viewBox="0 0 29 19"><rect x="0.6" y="3.4" width="27.4" height="12.4" rx="1" fill="#2c2c31" stroke="#4c4c51" stroke-width="1.1"/><path d="M7.6 6.8L4.6 9.6L7.6 12.4M21 6.8L24 9.6L21 12.4" stroke="#858585" stroke-width="1.3" fill="none" stroke-linecap="round" stroke-linejoin="round" /><rect x="11.2" y="0.7" width="6.2" height="17.6" rx="1.8" fill="#303035" stroke="#858585" stroke-width="1.3"/><rect x="13.5" y="4.8" width="1.7" height="9.4" fill="#707075"/></svg>
<svg style="left:847px;top:493.5px;" width="22" height="14" viewBox="0 0 22 14"><path d="M0.6 1H21.4M0.6 13.2H21.4" stroke="#858585" stroke-width="1.5"/><path d="M0.2 3.5H21.8V6.2L20.6 7.1L21.8 8V10.8H0.2V8L1.4 7.1L0.2 6.2Z" fill="#858585"/><path d="M2.6 7.1L4.4 5.2L6 6.6L7.8 4.8L9.4 6.6L11 4.8L12.6 6.6L14.2 4.8L16 6.6L17.6 5.2L19.4 7.1L17.6 9L16 7.6L14.2 9.4L12.6 7.6L11 9.4L9.4 7.6L7.8 9.4L6 7.6L4.4 9Z" fill="#212126"/></svg>
<svg style="left:885.5px;top:489.5px;" width="26" height="20" viewBox="0 0 26 20"><path d="M3.6 5.4C1.4 6 1 7 1 8.4V14.6C1 16.2 1.4 17.2 3.6 17.8M22.4 5.4C24.6 6 25 7 25 8.4V14.6C25 16.2 24.6 17.2 22.4 17.8" stroke="#55555a" stroke-width="1.2" fill="none" stroke-linecap="round" stroke-linejoin="round" /><path d="M9.4 8.4L5.8 11.6L9.4 14.8M16.6 8.4L20.2 11.6L16.6 14.8" stroke="#858585" stroke-width="1.3" fill="none" stroke-linecap="round" stroke-linejoin="round" /><path d="M13 2.4V19.2" stroke="#858585" stroke-width="1.1" fill="none" stroke-linecap="round" stroke-linejoin="round" /><path d="M10.2 0.6H15.8L13 4Z" fill="#858585"/></svg>
<div style="left:923px;top:486px;width:1px;height:30px;background:#3a3a40;"></div>
<svg style="left:934px;top:490px;" width="31" height="21" viewBox="0 0 31 21"><rect x="1.7" y="7.8" width="5" height="10.6" rx="0.8" fill="none" stroke="#4c4c51" stroke-width="1.2"/><rect x="23.6" y="7.8" width="5" height="10.6" rx="0.8" fill="none" stroke="#4c4c51" stroke-width="1.2"/><rect x="8.8" y="2.6" width="13" height="10.6" rx="1" fill="#303035" stroke="#707075" stroke-width="1.3"/><path d="M11.4 16.8L15.2 19.8L19 16.8" stroke="#707075" stroke-width="1.3" fill="none" stroke-linecap="round" stroke-linejoin="round" /></svg>
<svg style="left:977px;top:488px;" width="24" height="23" viewBox="0 0 24 23"><rect x="8.6" y="10.8" width="13.2" height="10.6" rx="0.8" fill="none" stroke="#4c4c51" stroke-width="1.2"/><rect x="1.7" y="4.8" width="13" height="10.4" rx="1" fill="#303035" stroke="#707075" stroke-width="1.3"/><path d="M16 1.8C19.2 1.2 20.8 3.4 20.6 7.2M18.4 5.4L20.6 7.8L22.8 5.4" stroke="#707075" stroke-width="1.2" fill="none" stroke-linecap="round" stroke-linejoin="round" /></svg>
<svg style="left:1014px;top:489px;" width="30" height="23" viewBox="0 0 30 23"><rect x="15" y="6.4" width="13" height="10.8" rx="0.8" fill="none" stroke="#4c4c51" stroke-width="1.2"/><rect x="1.6" y="6.4" width="13.2" height="10.8" rx="1" fill="#303035" stroke="#707075" stroke-width="1.3"/><path d="M8 13.4V9.4M5.6 11.2L8 8.8L10.4 11.2" stroke="#707075" stroke-width="1.2" fill="none" stroke-linecap="round" stroke-linejoin="round" /><path d="M17.6 5.4C17.8 1.6 22 1.6 22 5.4V13M19.8 11L22 13.4L24.2 11" stroke="#707075" stroke-width="1.2" fill="none" stroke-linecap="round" stroke-linejoin="round" /><path d="M8 17.4C8.2 22.4 13.6 22.4 14.6 19.6" stroke="#707075" stroke-width="1.2" fill="none" stroke-linecap="round" stroke-linejoin="round" /></svg>
<div style="left:1054px;top:486px;width:1px;height:30px;background:#3a3a40;"></div>
<svg style="left:1070px;top:489px;" width="21" height="21" viewBox="0 0 21 21"><path d="M9.09 6.40L5.69 9.79A5.1 5.1 0 0 0 12.91 17.01L16.30 13.61" stroke="#fff" stroke-width="2.8" fill="none" stroke-linecap="round" stroke-linejoin="round" stroke-linecap="butt"/><path d="M10.64 4.84L12.27 3.22M17.86 12.06L19.48 10.43" stroke="#fff" stroke-width="2.8" fill="none"/></svg>
<svg style="left:1109px;top:491px;" width="21" height="21" viewBox="0 0 21 21"><path d="M9.6 5.6L5.6 9.2A5 5 0 0 0 11.6 17.4" stroke="#e4e4e4" stroke-width="2.6" fill="none" stroke-linecap="round" stroke-linejoin="round" stroke-linecap="butt"/></svg>
<svg style="left:1720px;top:493.5px;" width="19" height="15" viewBox="0 0 19 15"><path d="M0.6 4.4H4.2L9.2 0.4V14.6L4.2 10.6H0.6Z" fill="#ffffff"/><path d="M11.4 5C12.8 6.4 12.8 8.6 11.4 10" stroke="#a8a8a8" stroke-width="1.5" fill="none" stroke-linecap="round" stroke-linejoin="round" /><path d="M14 2.8C16.8 5.4 16.8 9.6 14 12.2" stroke="#b8b8b8" stroke-width="1.5" fill="none" stroke-linecap="round" stroke-linejoin="round" /></svg>
<div style="left:1743px;top:499.7px;width:78px;height:3px;background:#2f9e20;border-radius:1.5px;"></div>
<div style="left:1817.6000000000001px;top:496.79999999999995px;width:9.2px;height:9.2px;background:#a8a8a8;border-radius:5px;"></div>
<div style="left:1834.5px;top:492px;width:39.5px;height:17.5px;border:1px solid #45454b;box-sizing:border-box;border-radius:3.5px;"></div>
<div style="left:1884px;top:491px;width:13px;height:19.5px;background:#27272c;border:1px solid #0f0f11;box-sizing:border-box;"></div>
<div style="left:1890px;top:491px;width:1px;height:19px;background:#0f0f11;"></div>
<div style="left:461px;top:566px;width:230px;height:1px;background:#0d0d0f;"></div>
<div style="left:692px;top:566px;width:1228px;height:1px;background:#34343a;"></div>
<svg style="left:692px;top:527px;" width="1218" height="14" viewBox="0 0 1218 14"><path d="M5.29 0V4" stroke="#3a3a41" stroke-width="1"/><path d="M9.58 0V9" stroke="#45454c" stroke-width="1"/><path d="M13.88 0V4" stroke="#3a3a41" stroke-width="1"/><path d="M18.17 0V9" stroke="#45454c" stroke-width="1"/><path d="M22.46 0V4" stroke="#3a3a41" stroke-width="1"/><path d="M26.75 0V9" stroke="#45454c" stroke-width="1"/><path d="M31.04 0V4" stroke="#3a3a41" stroke-width="1"/><path d="M35.33 0V9" stroke="#45454c" stroke-width="1"/><path d="M39.62 0V4" stroke="#3a3a41" stroke-width="1"/><path d="M43.92 0V9" stroke="#45454c" stroke-width="1"/><path d="M48.21 0V4" stroke="#3a3a41" stroke-width="1"/><path d="M52.50 0V9" stroke="#45454c" stroke-width="1"/><path d="M56.79 0V4" stroke="#3a3a41" stroke-width="1"/><path d="M61.08 0V9" stroke="#45454c" stroke-width="1"/><path d="M65.38 0V4" stroke="#3a3a41" stroke-width="1"/><path d="M69.67 0V9" stroke="#45454c" stroke-width="1"/><path d="M73.96 0V4" stroke="#3a3a41" stroke-width="1"/><path d="M78.25 0V9" stroke="#45454c" stroke-width="1"/><path d="M82.54 0V4" stroke="#3a3a41" stroke-width="1"/><path d="M86.83 0V9" stroke="#45454c" stroke-width="1"/><path d="M91.12 0V4" stroke="#3a3a41" stroke-width="1"/><path d="M95.42 0V9" stroke="#45454c" stroke-width="1"/><path d="M99.71 0V4" stroke="#3a3a41" stroke-width="1"/><path d="M104.00 0V9" stroke="#45454c" stroke-width="1"/><path d="M108.29 0V4" stroke="#3a3a41" stroke-width="1"/><path d="M112.58 0V9" stroke="#45454c" stroke-width="1"/><path d="M116.88 0V4" stroke="#3a3a41" stroke-width="1"/><path d="M121.17 0V9" stroke="#45454c" stroke-width="1"/><path d="M125.46 0V4" stroke="#3a3a41" stroke-width="1"/><path d="M129.75 0V13" stroke="#55555c" stroke-width="1"/><path d="M134.04 0V4" stroke="#3a3a41" stroke-width="1"/><path d="M138.33 0V9" stroke="#45454c" stroke-width="1"/><path d="M142.62 0V4" stroke="#3a3a41" stroke-width="1"/><path d="M146.92 0V9" stroke="#45454c" stroke-width="1"/><path d="M151.21 0V4" stroke="#3a3a41" stroke-width="1"/><path d="M155.50 0V9" stroke="#45454c" stroke-width="1"/><path d="M159.79 0V4" stroke="#3a3a41" stroke-width="1"/><path d="M164.08 0V9" stroke="#45454c" stroke-width="1"/><path d="M168.38 0V4" stroke="#3a3a41" stroke-width="1"/><path d="M172.67 0V9" stroke="#45454c" stroke-width="1"/><path d="M176.96 0V4" stroke="#3a3a41" stroke-width="1"/><path d="M181.25 0V9" stroke="#45454c" stroke-width="1"/><path d="M185.54 0V4" stroke="#3a3a41" stroke-width="1"/><path d="M189.83 0V9" stroke="#45454c" stroke-width="1"/><path d="M194.12 0V4" stroke="#3a3a41" stroke-width="1"/><path d="M198.42 0V9" stroke="#45454c" stroke-width="1"/><path d="M202.71 0V4" stroke="#3a3a41" stroke-width="1"/><path d="M207.00 0V9" stroke="#45454c" stroke-width="1"/><path d="M211.29 0V4" stroke="#3a3a41" stroke-width="1"/><path d="M215.58 0V9" stroke="#45454c" stroke-width="1"/><path d="M219.88 0V4" stroke="#3a3a41" stroke-width="1"/><path d="M224.17 0V9" stroke="#45454c" stroke-width="1"/><path d="M228.46 0V4" stroke="#3a3a41" stroke-width="1"/><path d="M232.75 0V9" stroke="#45454c" stroke-width="1"/><path d="M237.04 0V4" stroke="#3a3a41" stroke-width="1"/><path d="M241.33 0V9" stroke="#45454c" stroke-width="1"/><path d="M245.62 0V4" stroke="#3a3a41" stroke-width="1"/><path d="M249.92 0V9" stroke="#45454c" stroke-width="1"/><path d="M254.21 0V4" stroke="#3a3a41" stroke-width="1"/><path d="M262.79 0V4" stroke="#3a3a41" stroke-width="1"/><path d="M267.08 0V9" stroke="#45454c" stroke-width="1"/><path d="M271.38 0V4" stroke="#3a3a41" stroke-width="1"/><path d="M275.67 0V9" stroke="#45454c" stroke-width="1"/><path d="M279.96 0V4" stroke="#3a3a41" stroke-width="1"/><path d="M284.25 0V9" stroke="#45454c" stroke-width="1"/><path d="M288.54 0V4" stroke="#3a3a41" stroke-width="1"/><path d="M292.83 0V9" stroke="#45454c" stroke-width="1"/><path d="M297.12 0V4" stroke="#3a3a41" stroke-width="1"/><path d="M301.42 0V9" stroke="#45454c" stroke-width="1"/><path d="M305.71 0V4" stroke="#3a3a41" stroke-width="1"/><path d="M310.00 0V9" stroke="#45454c" stroke-width="1"/><path d="M314.29 0V4" stroke="#3a3a41" stroke-width="1"/><path d="M318.58 0V9" stroke="#45454c" stroke-width="1"/><path d="M322.88 0V4" stroke="#3a3a41" stroke-width="1"/><path d="M327.17 0V9" stroke="#45454c" stroke-width="1"/><path d="M331.46 0V4" stroke="#3a3a41" stroke-width="1"/><path d="M335.75 0V9" stroke="#45454c" stroke-width="1"/><path d="M340.04 0V4" stroke="#3a3a41" stroke-width="1"/><path d="M344.33 0V9" stroke="#45454c" stroke-width="1"/><path d="M348.62 0V4" stroke="#3a3a41" stroke-width="1"/><path d="M352.92 0V9" stroke="#45454c" stroke-width="1"/><path d="M357.21 0V4" stroke="#3a3a41" stroke-width="1"/><path d="M361.50 0V9" stroke="#45454c" stroke-width="1"/><path d="M365.79 0V4" stroke="#3a3a41" stroke-width="1"/><path d="M370.08 0V9" stroke="#45454c" stroke-width="1"/><path d="M374.38 0V4" stroke="#3a3a41" stroke-width="1"/><path d="M378.67 0V9" stroke="#45454c" stroke-width="1"/><path d="M382.96 0V4" stroke="#3a3a41" stroke-width="1"/><path d="M387.25 0V13" stroke="#55555c" stroke-width="1"/><path d="M391.54 0V4" stroke="#3a3a41" stroke-width="1"/><path d="M395.83 0V9" stroke="#45454c" stroke-width="1"/><path d="M400.12 0V4" stroke="#3a3a41" stroke-width="1"/><path d="M404.42 0V9" stroke="#45454c" stroke-width="1"/><path d="M408.71 0V4" stroke="#3a3a41" stroke-width="1"/><path d="M413.00 0V9" stroke="#45454c" stroke-width="1"/><path d="M417.29 0V4" stroke="#3a3a41" stroke-width="1"/><path d="M421.58 0V9" stroke="#45454c" stroke-width="1"/><path d="M425.88 0V4" stroke="#3a3a41" stroke-width="1"/><path d="M430.17 0V9" stroke="#45454c" stroke-width="1"/><path d="M434.46 0V4" stroke="#3a3a41" stroke-width="1"/><path d="M438.75 0V9" stroke="#45454c" stroke-width="1"/><path d="M443.04 0V4" stroke="#3a3a41" stroke-width="1"/><path d="M447.33 0V9" stroke="#45454c" stroke-width="1"/><path d="M451.62 0V4" stroke="#3a3a41" stroke-width="1"/><path d="M455.92 0V9" stroke="#45454c" stroke-width="1"/><path d="M460.21 0V4" stroke="#3a3a41" stroke-width="1"/><path d="M464.50 0V9" stroke="#45454c" stroke-width="1"/><path d="M468.79 0V4" stroke="#3a3a41" stroke-width="1"/><path d="M473.08 0V9" stroke="#45454c" stroke-width="1"/><path d="M477.38 0V4" stroke="#3a3a41" stroke-width="1"/><path d="M481.67 0V9" stroke="#45454c" stroke-width="1"/><path d="M485.96 0V4" stroke="#3a3a41" stroke-width="1"/><path d="M490.25 0V9" stroke="#45454c" stroke-width="1"/><path d="M494.54 0V4" stroke="#3a3a41" stroke-width="1"/><path d="M498.83 0V9" stroke="#45454c" stroke-width="1"/><path d="M503.12 0V4" stroke="#3a3a41" stroke-width="1"/><path d="M507.42 0V9" stroke="#45454c" stroke-width="1"/><path d="M511.71 0V4" stroke="#3a3a41" stroke-width="1"/><path d="M520.29 0V4" stroke="#3a3a41" stroke-width="1"/><path d="M524.58 0V9" stroke="#45454c" stroke-width="1"/><path d="M528.88 0V4" stroke="#3a3a41" stroke-width="1"/><path d="M533.17 0V9" stroke="#45454c" stroke-width="1"/><path d="M537.46 0V4" stroke="#3a3a41" stroke-width="1"/><path d="M541.75 0V9" stroke="#45454c" stroke-width="1"/><path d="M546.04 0V4" stroke="#3a3a41" stroke-width="1"/><path d="M550.33 0V9" stroke="#45454c" stroke-width="1"/><path d="M554.62 0V4" stroke="#3a3a41" stroke-width="1"/><path d="M558.92 0V9" stroke="#45454c" stroke-width="1"/><path d="M563.21 0V4" stroke="#3a3a41" stroke-width="1"/><path d="M567.50 0V9" stroke="#45454c" stroke-width="1"/><path d="M571.79 0V4" stroke="#3a3a41" stroke-width="1"/><path d="M576.08 0V9" stroke="#45454c" stroke-width="1"/><path d="M580.38 0V4" stroke="#3a3a41" stroke-width="1"/><path d="M584.67 0V9" stroke="#45454c" stroke-width="1"/><path d="M588.96 0V4" stroke="#3a3a41" stroke-width="1"/><path d="M593.25 0V9" stroke="#45454c" stroke-width="1"/><path d="M597.54 0V4" stroke="#3a3a41" stroke-width="1"/><path d="M601.83 0V9" stroke="#45454c" stroke-width="1"/><path d="M606.12 0V4" stroke="#3a3a41" stroke-width="1"/><path d="M610.42 0V9" stroke="#45454c" stroke-width="1"/><path d="M614.71 0V4" stroke="#3a3a41" stroke-width="1"/><path d="M619.00 0V9" stroke="#45454c" stroke-width="1"/><path d="M623.29 0V4" stroke="#3a3a41" stroke-width="1"/><path d="M627.58 0V9" stroke="#45454c" stroke-width="1"/><path d="M631.88 0V4" stroke="#3a3a41" stroke-width="1"/><path d="M636.17 0V9" stroke="#45454c" stroke-width="1"/><path d="M640.46 0V4" stroke="#3a3a41" stroke-width="1"/><path d="M644.75 0V13" stroke="#55555c" stroke-width="1"/><path d="M649.04 0V4" stroke="#3a3a41" stroke-width="1"/><path d="M653.33 0V9" stroke="#45454c" stroke-width="1"/><path d="M657.62 0V4" stroke="#3a3a41" stroke-width="1"/><path d="M661.92 0V9" stroke="#45454c" stroke-width="1"/><path d="M666.21 0V4" stroke="#3a3a41" stroke-width="1"/><path d="M670.50 0V9" stroke="#45454c" stroke-width="1"/><path d="M674.79 0V4" stroke="#3a3a41" stroke-width="1"/><path d="M679.08 0V9" stroke="#45454c" stroke-width="1"/><path d="M683.38 0V4" stroke="#3a3a41" stroke-width="1"/><path d="M687.67 0V9" stroke="#45454c" stroke-width="1"/><path d="M691.96 0V4" stroke="#3a3a41" stroke-width="1"/><path d="M696.25 0V9" stroke="#45454c" stroke-width="1"/><path d="M700.54 0V4" stroke="#3a3a41" stroke-width="1"/><path d="M704.83 0V9" stroke="#45454c" stroke-width="1"/><path d="M709.12 0V4" stroke="#3a3a41" stroke-width="1"/><path d="M713.42 0V9" stroke="#45454c" stroke-width="1"/><path d="M717.71 0V4" stroke="#3a3a41" stroke-width="1"/><path d="M722.00 0V9" stroke="#45454c" stroke-width="1"/><path d="M726.29 0V4" stroke="#3a3a41" stroke-width="1"/><path d="M730.58 0V9" stroke="#45454c" stroke-width="1"/><path d="M734.88 0V4" stroke="#3a3a41" stroke-width="1"/><path d="M739.17 0V9" stroke="#45454c" stroke-width="1"/><path d="M743.46 0V4" stroke="#3a3a41" stroke-width="1"/><path d="M747.75 0V9" stroke="#45454c" stroke-width="1"/><path d="M752.04 0V4" stroke="#3a3a41" stroke-width="1"/><path d="M756.33 0V9" stroke="#45454c" stroke-width="1"/><path d="M760.62 0V4" stroke="#3a3a41" stroke-width="1"/><path d="M764.92 0V9" stroke="#45454c" stroke-width="1"/><path d="M769.21 0V4" stroke="#3a3a41" stroke-width="1"/><path d="M777.79 0V4" stroke="#3a3a41" stroke-width="1"/><path d="M782.08 0V9" stroke="#45454c" stroke-width="1"/><path d="M786.38 0V4" stroke="#3a3a41" stroke-width="1"/><path d="M790.67 0V9" stroke="#45454c" stroke-width="1"/><path d="M794.96 0V4" stroke="#3a3a41" stroke-width="1"/><path d="M799.25 0V9" stroke="#45454c" stroke-width="1"/><path d="M803.54 0V4" stroke="#3a3a41" stroke-width="1"/><path d="M807.83 0V9" stroke="#45454c" stroke-width="1"/><path d="M812.12 0V4" stroke="#3a3a41" stroke-width="1"/><path d="M816.42 0V9" stroke="#45454c" stroke-width="1"/><path d="M820.71 0V4" stroke="#3a3a41" stroke-width="1"/><path d="M825.00 0V9" stroke="#45454c" stroke-width="1"/><path d="M829.29 0V4" stroke="#3a3a41" stroke-width="1"/><path d="M833.58 0V9" stroke="#45454c" stroke-width="1"/><path d="M837.88 0V4" stroke="#3a3a41" stroke-width="1"/><path d="M842.17 0V9" stroke="#45454c" stroke-width="1"/><path d="M846.46 0V4" stroke="#3a3a41" stroke-width="1"/><path d="M850.75 0V9" stroke="#45454c" stroke-width="1"/><path d="M855.04 0V4" stroke="#3a3a41" stroke-width="1"/><path d="M859.33 0V9" stroke="#45454c" stroke-width="1"/><path d="M863.62 0V4" stroke="#3a3a41" stroke-width="1"/><path d="M867.92 0V9" stroke="#45454c" stroke-width="1"/><path d="M872.21 0V4" stroke="#3a3a41" stroke-width="1"/><path d="M876.50 0V9" stroke="#45454c" stroke-width="1"/><path d="M880.79 0V4" stroke="#3a3a41" stroke-width="1"/><path d="M885.08 0V9" stroke="#45454c" stroke-width="1"/><path d="M889.38 0V4" stroke="#3a3a41" stroke-width="1"/><path d="M893.67 0V9" stroke="#45454c" stroke-width="1"/><path d="M897.96 0V4" stroke="#3a3a41" stroke-width="1"/><path d="M902.25 0V13" stroke="#55555c" stroke-width="1"/><path d="M906.54 0V4" stroke="#3a3a41" stroke-width="1"/><path d="M910.83 0V9" stroke="#45454c" stroke-width="1"/><path d="M915.12 0V4" stroke="#3a3a41" stroke-width="1"/><path d="M919.42 0V9" stroke="#45454c" stroke-width="1"/><path d="M923.71 0V4" stroke="#3a3a41" stroke-width="1"/><path d="M928.00 0V9" stroke="#45454c" stroke-width="1"/><path d="M932.29 0V4" stroke="#3a3a41" stroke-width="1"/><path d="M936.58 0V9" stroke="#45454c" stroke-width="1"/><path d="M940.88 0V4" stroke="#3a3a41" stroke-width="1"/><path d="M945.17 0V9" stroke="#45454c" stroke-width="1"/><path d="M949.46 0V4" stroke="#3a3a41" stroke-width="1"/><path d="M953.75 0V9" stroke="#45454c" stroke-width="1"/><path d="M958.04 0V4" stroke="#3a3a41" stroke-width="1"/><path d="M962.33 0V9" stroke="#45454c" stroke-width="1"/><path d="M966.62 0V4" stroke="#3a3a41" stroke-width="1"/><path d="M970.92 0V9" stroke="#45454c" stroke-width="1"/><path d="M975.21 0V4" stroke="#3a3a41" stroke-width="1"/><path d="M979.50 0V9" stroke="#45454c" stroke-width="1"/><path d="M983.79 0V4" stroke="#3a3a41" stroke-width="1"/><path d="M988.08 0V9" stroke="#45454c" stroke-width="1"/><path d="M992.38 0V4" stroke="#3a3a41" stroke-width="1"/><path d="M996.67 0V9" stroke="#45454c" stroke-width="1"/><path d="M1000.96 0V4" stroke="#3a3a41" stroke-width="1"/><path d="M1005.25 0V9" stroke="#45454c" stroke-width="1"/><path d="M1009.54 0V4" stroke="#3a3a41" stroke-width="1"/><path d="M1013.83 0V9" stroke="#45454c" stroke-width="1"/><path d="M1018.12 0V4" stroke="#3a3a41" stroke-width="1"/><path d="M1022.42 0V9" stroke="#45454c" stroke-width="1"/><path d="M1026.71 0V4" stroke="#3a3a41" stroke-width="1"/><path d="M1035.29 0V4" stroke="#3a3a41" stroke-width="1"/><path d="M1039.58 0V9" stroke="#45454c" stroke-width="1"/><path d="M1043.88 0V4" stroke="#3a3a41" stroke-width="1"/><path d="M1048.17 0V9" stroke="#45454c" stroke-width="1"/><path d="M1052.46 0V4" stroke="#3a3a41" stroke-width="1"/><path d="M1056.75 0V9" stroke="#45454c" stroke-width="1"/><path d="M1061.04 0V4" stroke="#3a3a41" stroke-width="1"/><path d="M1065.33 0V9" stroke="#45454c" stroke-width="1"/><path d="M1069.62 0V4" stroke="#3a3a41" stroke-width="1"/><path d="M1073.92 0V9" stroke="#45454c" stroke-width="1"/><path d="M1078.21 0V4" stroke="#3a3a41" stroke-width="1"/><path d="M1082.50 0V9" stroke="#45454c" stroke-width="1"/><path d="M1086.79 0V4" stroke="#3a3a41" stroke-width="1"/><path d="M1091.08 0V9" stroke="#45454c" stroke-width="1"/><path d="M1095.38 0V4" stroke="#3a3a41" stroke-width="1"/><path d="M1099.67 0V9" stroke="#45454c" stroke-width="1"/><path d="M1103.96 0V4" stroke="#3a3a41" stroke-width="1"/><path d="M1108.25 0V9" stroke="#45454c" stroke-width="1"/><path d="M1112.54 0V4" stroke="#3a3a41" stroke-width="1"/><path d="M1116.83 0V9" stroke="#45454c" stroke-width="1"/><path d="M1121.12 0V4" stroke="#3a3a41" stroke-width="1"/><path d="M1125.42 0V9" stroke="#45454c" stroke-width="1"/><path d="M1129.71 0V4" stroke="#3a3a41" stroke-width="1"/><path d="M1134.00 0V9" stroke="#45454c" stroke-width="1"/><path d="M1138.29 0V4" stroke="#3a3a41" stroke-width="1"/><path d="M1142.58 0V9" stroke="#45454c" stroke-width="1"/><path d="M1146.88 0V4" stroke="#3a3a41" stroke-width="1"/><path d="M1151.17 0V9" stroke="#45454c" stroke-width="1"/><path d="M1155.46 0V4" stroke="#3a3a41" stroke-width="1"/><path d="M1159.75 0V13" stroke="#55555c" stroke-width="1"/><path d="M1164.04 0V4" stroke="#3a3a41" stroke-width="1"/><path d="M1168.33 0V9" stroke="#45454c" stroke-width="1"/><path d="M1172.62 0V4" stroke="#3a3a41" stroke-width="1"/><path d="M1176.92 0V9" stroke="#45454c" stroke-width="1"/><path d="M1181.21 0V4" stroke="#3a3a41" stroke-width="1"/><path d="M1185.50 0V9" stroke="#45454c" stroke-width="1"/><path d="M1189.79 0V4" stroke="#3a3a41" stroke-width="1"/><path d="M1194.08 0V9" stroke="#45454c" stroke-width="1"/><path d="M1198.38 0V4" stroke="#3a3a41" stroke-width="1"/><path d="M1202.67 0V9" stroke="#45454c" stroke-width="1"/><path d="M1206.96 0V4" stroke="#3a3a41" stroke-width="1"/><path d="M1211.25 0V9" stroke="#45454c" stroke-width="1"/><path d="M1215.54 0V4" stroke="#3a3a41" stroke-width="1"/></svg>
<div style="left:950px;top:527px;width:1px;height:24px;background:#5c5c64;"></div>
<div style="left:950px;top:567px;width:1px;height:406px;background:#34343a;"></div>
<div style="left:1208px;top:527px;width:1px;height:24px;background:#5c5c64;"></div>
<div style="left:1208px;top:567px;width:1px;height:406px;background:#34343a;"></div>
<div style="left:1465px;top:527px;width:1px;height:24px;background:#5c5c64;"></div>
<div style="left:1465px;top:567px;width:1px;height:406px;background:#34343a;"></div>
<div style="left:1722px;top:527px;width:1px;height:24px;background:#5c5c64;"></div>
<div style="left:1722px;top:567px;width:1px;height:406px;background:#34343a;"></div>
<div style="left:1909px;top:526px;width:11px;height:458px;background:#2c2c32;"></div>
<div style="left:1908px;top:526px;width:1px;height:458px;background:#1e1e22;"></div>
<div style="left:461px;top:690px;width:1448px;height:1px;background:#141417;"></div>
<div style="left:461px;top:691px;width:3px;height:83px;background:#4a80b8;"></div>
<div style="left:480px;top:691px;width:1px;height:83px;background:#141417;"></div>
<div style="left:524px;top:691px;width:1px;height:26px;background:#141417;"></div>
<div style="left:465px;top:717px;width:226px;height:1px;background:#141417;"></div>
<div style="left:488px;top:693px;width:32.5px;height:20px;border:1.5px solid #e64b3d;box-sizing:border-box;border-radius:1.5px;"></div>
<svg style="left:540px;top:724px;" width="13" height="13" viewBox="0 0 13 13"><path d="M2.6 6V4.2a3.6 3.6 0 0 1 7.2 0V4.6" stroke="#47474c" stroke-width="1.4" fill="none" stroke-linecap="round" stroke-linejoin="round" /><rect x="0.4" y="5.6" width="12" height="7.2" rx="1.2" fill="#47474c"/></svg>
<svg style="left:564.7px;top:724px;" width="18" height="13" viewBox="0 0 18 13"><rect x="0.8" y="0.8" width="16" height="11.2" rx="1.8" fill="none" stroke="#fff" stroke-width="1.5"/><path d="M7 3.8L4 6.4L7 9M10.6 3.8L13.6 6.4L10.6 9" stroke="#fff" stroke-width="1.3" fill="none" stroke-linecap="round" stroke-linejoin="round" /></svg>
<svg style="left:592px;top:724px;" width="18.5" height="13" viewBox="0 0 18.5 13"><rect x="0.7" y="0.7" width="17" height="11.4" rx="1.4" fill="#55555a" stroke="#d4d4d4" stroke-width="1.3"/><rect x="2.6" y="2.6" width="1.4" height="1.5" fill="#d4d4d4"/><rect x="2.6" y="5.6" width="1.4" height="1.5" fill="#d4d4d4"/><rect x="2.6" y="8.6" width="1.4" height="1.5" fill="#d4d4d4"/><rect x="14.4" y="2.6" width="1.4" height="1.5" fill="#d4d4d4"/><rect x="14.4" y="5.6" width="1.4" height="1.5" fill="#d4d4d4"/><rect x="14.4" y="8.6" width="1.4" height="1.5" fill="#d4d4d4"/></svg>
<div style="left:461px;top:774px;width:1459px;height:2px;background:#141417;"></div>
<div style="left:461px;top:776px;width:1459px;height:2px;background:#3e3e42;"></div>
<div style="left:461px;top:778px;width:1459px;height:1px;background:#141417;"></div>
<div style="left:461px;top:779px;width:3px;height:59px;background:#4a9a62;"></div>
<div style="left:480px;top:779px;width:1px;height:59px;background:#141417;"></div>
<div style="left:524px;top:779px;width:1px;height:25px;background:#141417;"></div>
<div style="left:465px;top:804px;width:226px;height:1px;background:#141417;"></div>
<div style="left:461px;top:838px;width:230px;height:1px;background:#141417;"></div>
<div style="left:692px;top:838px;width:1217px;height:1px;background:#303036;"></div>
<svg style="left:540px;top:815.2px;" width="13" height="13" viewBox="0 0 13 13"><path d="M2.6 6V4.2a3.6 3.6 0 0 1 7.2 0V4.6" stroke="#47474c" stroke-width="1.4" fill="none" stroke-linecap="round" stroke-linejoin="round" /><rect x="0.4" y="5.6" width="12" height="7.2" rx="1.2" fill="#47474c"/></svg>
<svg style="left:564.7px;top:815px;" width="18" height="13" viewBox="0 0 18 13"><rect x="0.8" y="0.8" width="16" height="11.2" rx="1.8" fill="none" stroke="#fff" stroke-width="1.5"/><path d="M7 3.8L4 6.4L7 9M10.6 3.8L13.6 6.4L10.6 9" stroke="#fff" stroke-width="1.3" fill="none" stroke-linecap="round" stroke-linejoin="round" /></svg>
<div style="left:592px;top:812px;width:18.2px;height:17.8px;background:#36363b;border-radius:3.5px;"></div>
<div style="left:621px;top:812px;width:18.2px;height:17.8px;background:#36363b;border-radius:3.5px;"></div>
<div style="left:693px;top:692px;width:160px;height:82px;background:#e64b3d;border-radius:2.5px;"></div>
<div style="left:695px;top:694px;width:156px;height:78px;background:#2a1f2e;border-radius:1px;"></div>
<div style="left:696px;top:695px;width:154px;height:76px;background:#9b76a0;"></div>
<div style="left:696px;top:749px;width:154px;height:1px;background:#6f5076;"></div>
<svg style="left:762px;top:701px;" width="24" height="42" viewBox="0 0 24 42"><path d="M16.7 0.5L0.2 25.8H9.2L6.4 41.6L22.9 16.4H14Z" fill="#664a6e"/></svg>
<div style="left:692px;top:973px;width:1217px;height:11px;background:#222227;"></div>
<div style="left:693px;top:974px;width:608px;height:9px;background:#5a5d66;border-radius:4.5px;"></div>
<div class="t" style="left:39.00px;top:6.90px;height:16px;line-height:16px;font-size:12.56px;color:#9a9a9a;transform:scaleX(1.0378);transform-origin:0 50%;">DaVinci Resolve</div>
<div class="t" style="left:147.80px;top:6.90px;height:16px;line-height:16px;font-size:12.56px;color:#9a9a9a;transform:scaleX(1.0584);transform-origin:0 50%;">File</div>
<div class="t" style="left:183.30px;top:6.90px;height:16px;line-height:16px;font-size:12.56px;color:#9a9a9a;transform:scaleX(1.1052);transform-origin:0 50%;">Edit</div>
<div class="t" style="left:220.70px;top:6.90px;height:16px;line-height:16px;font-size:12.56px;color:#9a9a9a;transform:scaleX(1.1411);transform-origin:0 50%;">Trim</div>
<div class="t" style="left:262.80px;top:6.90px;height:16px;line-height:16px;font-size:12.56px;color:#9a9a9a;transform:scaleX(1.1117);transform-origin:0 50%;">Timeline</div>
<div class="t" style="left:328.80px;top:6.90px;height:16px;line-height:16px;font-size:12.56px;color:#9a9a9a;transform:scaleX(1.0867);transform-origin:0 50%;">Clip</div>
<div class="t" style="left:366.80px;top:6.90px;height:16px;line-height:16px;font-size:12.56px;color:#9a9a9a;transform:scaleX(1.1115);transform-origin:0 50%;">Mark</div>
<div class="t" style="left:411.50px;top:6.90px;height:16px;line-height:16px;font-size:12.56px;color:#9a9a9a;transform:scaleX(1.1050);transform-origin:0 50%;">View</div>
<div class="t" style="left:455.50px;top:6.90px;height:16px;line-height:16px;font-size:12.56px;color:#9a9a9a;transform:scaleX(1.0467);transform-origin:0 50%;">Playback</div>
<div class="t" style="left:523.30px;top:6.90px;height:16px;line-height:16px;font-size:12.56px;color:#9a9a9a;transform:scaleX(1.0538);transform-origin:0 50%;">Fusion</div>
<div class="t" style="left:577.00px;top:6.90px;height:16px;line-height:16px;font-size:12.56px;color:#9a9a9a;transform:scaleX(1.1006);transform-origin:0 50%;">Color</div>
<div class="t" style="left:624.00px;top:6.90px;height:16px;line-height:16px;font-size:12.56px;color:#9a9a9a;transform:scaleX(1.1048);transform-origin:0 50%;">Fairlight</div>
<div class="t" style="left:686.30px;top:6.90px;height:16px;line-height:16px;font-size:12.56px;color:#9a9a9a;transform:scaleX(1.0875);transform-origin:0 50%;">Workspace</div>
<div class="t" style="left:768.30px;top:6.90px;height:16px;line-height:16px;font-size:12.56px;color:#9a9a9a;transform:scaleX(1.1041);transform-origin:0 50%;">Help</div>
<div class="t" style="left:100.20px;top:41.30px;height:16px;line-height:16px;font-size:12.09px;color:#ffffff;transform:scaleX(1.0358);transform-origin:0 50%;">Media Pool</div>
<div class="t" style="left:218.80px;top:41.30px;height:16px;line-height:16px;font-size:12.09px;color:#ffffff;transform:scaleX(1.0272);transform-origin:0 50%;">Effects</div>
<div class="t" style="left:312.80px;top:41.30px;height:16px;line-height:16px;font-size:12.09px;color:#929292;transform:scaleX(1.0627);transform-origin:0 50%;">Index</div>
<div class="t" style="left:400.80px;top:41.30px;height:16px;line-height:16px;font-size:12.09px;color:#929292;transform:scaleX(1.0465);transform-origin:0 50%;">Sound Library</div>
<div class="t" style="left:535.50px;top:41.30px;height:16px;line-height:16px;font-size:12.09px;color:#929292;transform:scaleX(1.0392);transform-origin:0 50%;">Keyframes</div>
<div class="t" style="left:791.00px;top:38.90px;height:18px;line-height:18px;font-size:13.95px;color:#ffffff;-webkit-text-stroke:0.4px #ffffff;letter-spacing:0.066px;transform:scaleX(1.1600);transform-origin:0 50%;">13-3d-carousel-ui-animation-in-davinci-resolve</div>
<div class="t" style="left:1475.50px;top:41.30px;height:16px;line-height:16px;font-size:12.09px;color:#929292;transform:scaleX(1.0457);transform-origin:0 50%;">Quick Export</div>
<div class="t" style="left:1603.80px;top:41.30px;height:16px;line-height:16px;font-size:12.09px;color:#929292;transform:scaleX(1.0836);transform-origin:0 50%;">Mixer</div>
<div class="t" style="left:1691.80px;top:41.30px;height:16px;line-height:16px;font-size:12.09px;color:#929292;transform:scaleX(1.0663);transform-origin:0 50%;">Metadata</div>
<div class="t" style="left:1801.50px;top:41.30px;height:16px;line-height:16px;font-size:12.09px;color:#ffffff;transform:scaleX(1.0727);transform-origin:0 50%;">Inspector</div>
<div class="t" style="left:575.20px;top:69.90px;height:16px;line-height:16px;font-size:12.09px;color:#ffffff;transform:scaleX(1.0431);transform-origin:0 50%;">Fit</div>
<div class="t" style="left:627.80px;top:69.90px;height:16px;line-height:16px;font-size:12.09px;color:#ffffff;-webkit-text-stroke:0.4px #ffffff;transform:scaleX(1.0797);transform-origin:0 50%;">00:00:05:00</div>
<div class="t" style="left:940.20px;top:71.00px;height:16px;line-height:16px;font-size:12.56px;color:#ffffff;-webkit-text-stroke:0.4px #ffffff;transform:scaleX(1.1198);transform-origin:0 50%;">Timeline 1</div>
<div class="t" style="left:1193.50px;top:69.90px;height:16px;line-height:16px;font-size:12.09px;color:#ffffff;-webkit-text-stroke:0.4px #ffffff;transform:scaleX(1.1126);transform-origin:0 50%;">00:00:00:00</div>
<div class="t" style="left:1572.80px;top:69.90px;height:17px;line-height:17px;font-size:13.02px;color:#ffffff;-webkit-text-stroke:0.4px #ffffff;transform:scaleX(1.0767);transform-origin:0 50%;">Generator - Four Color Gradient</div>
<div class="t" style="left:28.80px;top:96.80px;height:16px;line-height:16px;font-size:12.46px;color:#ffffff;transform:scaleX(1.1245);transform-origin:0 50%;">Master</div>
<div class="t" style="left:160.80px;top:97.40px;height:15px;line-height:15px;font-size:11.62px;color:#ffffff;transform:scaleX(1.0230);transform-origin:0 50%;">Master</div>
<div class="t" style="left:7.90px;top:306.70px;height:16px;line-height:16px;font-size:12.46px;color:#ffffff;transform:scaleX(1.0780);transform-origin:0 50%;">Power Bins</div>
<div class="t" style="left:28.80px;top:337.70px;height:16px;line-height:16px;font-size:12.46px;color:#929292;transform:scaleX(1.1218);transform-origin:0 50%;">Master</div>
<div class="t" style="left:7.90px;top:409.70px;height:16px;line-height:16px;font-size:12.46px;color:#ffffff;transform:scaleX(1.0803);transform-origin:0 50%;">Smart Bins</div>
<div class="t" style="left:33.50px;top:440.70px;height:16px;line-height:16px;font-size:12.46px;color:#929292;transform:scaleX(1.0935);transform-origin:0 50%;">Keywords</div>
<div class="t" style="left:33.50px;top:467.90px;height:16px;line-height:16px;font-size:12.46px;color:#929292;transform:scaleX(1.0883);transform-origin:0 50%;">Collections</div>
<div class="t" style="left:182.50px;top:177.40px;height:14px;line-height:14px;font-size:10.7px;color:#ffffff;transform:scaleX(1.0898);transform-origin:0 50%;">Timeline 1</div>
<div class="t" style="left:28.80px;top:556.70px;height:16px;line-height:16px;font-size:12.46px;color:#8e8e8e;transform:scaleX(1.1482);transform-origin:0 50%;">Toolbox</div>
<div class="t" style="left:40.50px;top:583.80px;height:16px;line-height:16px;font-size:12.46px;color:#8e8e8e;transform:scaleX(1.1016);transform-origin:0 50%;">Video Transitions</div>
<div class="t" style="left:40.50px;top:610.80px;height:16px;line-height:16px;font-size:12.46px;color:#8e8e8e;transform:scaleX(1.1096);transform-origin:0 50%;">Audio Transitions</div>
<div class="t" style="left:40.50px;top:637.80px;height:16px;line-height:16px;font-size:12.46px;color:#8e8e8e;transform:scaleX(1.1025);transform-origin:0 50%;">Titles</div>
<div class="t" style="left:40.50px;top:664.80px;height:16px;line-height:16px;font-size:12.46px;color:#ffffff;transform:scaleX(1.1108);transform-origin:0 50%;">Generators</div>
<div class="t" style="left:40.50px;top:691.80px;height:16px;line-height:16px;font-size:12.46px;color:#8e8e8e;transform:scaleX(1.0834);transform-origin:0 50%;">Effects</div>
<div class="t" style="left:28.80px;top:718.80px;height:16px;line-height:16px;font-size:12.46px;color:#8e8e8e;transform:scaleX(1.0372);transform-origin:0 50%;">Open FX</div>
<div class="t" style="left:40.50px;top:745.90px;height:16px;line-height:16px;font-size:12.46px;color:#8e8e8e;transform:scaleX(1.1001);transform-origin:0 50%;">Filters</div>
<div class="t" style="left:28.80px;top:772.90px;height:16px;line-height:16px;font-size:12.46px;color:#8e8e8e;transform:scaleX(1.0442);transform-origin:0 50%;">Audio FX</div>
<div class="t" style="left:40.50px;top:799.80px;height:16px;line-height:16px;font-size:12.46px;color:#8e8e8e;transform:scaleX(1.0554);transform-origin:0 50%;">Fairlight FX</div>
<div class="t" style="left:28.80px;top:866.90px;height:16px;line-height:16px;font-size:12.46px;color:#8e8e8e;transform:scaleX(1.0816);transform-origin:0 50%;">Favorites</div>
<div class="t" style="left:162.90px;top:559.80px;height:16px;line-height:16px;font-size:12.56px;color:#9a9a9a;-webkit-text-stroke:0.4px #9a9a9a;transform:scaleX(1.1328);transform-origin:0 50%;">Generators</div>
<div class="t" style="left:230.90px;top:597.70px;height:15px;line-height:15px;font-size:11.16px;color:#8e8e8e;">10 Step</div>
<div class="t" style="left:230.90px;top:634.70px;height:15px;line-height:15px;font-size:11.16px;color:#8e8e8e;transform:scaleX(0.9943);transform-origin:0 50%;">100mV Steps</div>
<div class="t" style="left:230.90px;top:671.70px;height:15px;line-height:15px;font-size:11.16px;color:#8e8e8e;transform:scaleX(1.0259);transform-origin:0 50%;">BT.2111 Color Bar HLG Narrow</div>
<div class="t" style="left:230.90px;top:708.70px;height:15px;line-height:15px;font-size:11.16px;color:#8e8e8e;transform:scaleX(1.0100);transform-origin:0 50%;">BT.2111 Color Bar PQ Full</div>
<div class="t" style="left:230.90px;top:745.70px;height:15px;line-height:15px;font-size:11.16px;color:#8e8e8e;transform:scaleX(1.0292);transform-origin:0 50%;">BT.2111 Color Bar PQ Narrow</div>
<div class="t" style="left:230.90px;top:782.70px;height:15px;line-height:15px;font-size:11.16px;color:#8e8e8e;transform:scaleX(0.9922);transform-origin:0 50%;">EBU Color Bar</div>
<div class="t" style="left:230.90px;top:819.70px;height:15px;line-height:15px;font-size:11.16px;color:#ffffff;transform:scaleX(1.0376);transform-origin:0 50%;">Four Color Gradient</div>
<div class="t" style="left:230.90px;top:856.70px;height:15px;line-height:15px;font-size:11.16px;color:#8e8e8e;transform:scaleX(0.9712);transform-origin:0 50%;">Grey Scale</div>
<div class="t" style="left:230.90px;top:893.70px;height:15px;line-height:15px;font-size:11.16px;color:#8e8e8e;transform:scaleX(0.9712);transform-origin:0 50%;">SMPTE Color Bar</div>
<div class="t" style="left:230.90px;top:930.70px;height:15px;line-height:15px;font-size:11.16px;color:#8e8e8e;transform:scaleX(1.0187);transform-origin:0 50%;">Solid Color</div>
<div class="t" style="left:230.90px;top:967.70px;height:15px;line-height:15px;font-size:11.16px;color:#8e8e8e;transform:scaleX(1.0608);transform-origin:0 50%;">Window</div>
<div class="t" style="left:1530.80px;top:123.00px;height:15px;line-height:15px;font-size:11.62px;color:#ffffff;transform:scaleX(1.0277);transform-origin:0 50%;">Video</div>
<div class="t" style="left:1594.70px;top:123.00px;height:15px;line-height:15px;font-size:11.62px;color:#48484d;transform:scaleX(1.0268);transform-origin:0 50%;">Audio</div>
<div class="t" style="left:1657.00px;top:123.00px;height:15px;line-height:15px;font-size:11.62px;color:#48484d;transform:scaleX(0.9779);transform-origin:0 50%;">Effects</div>
<div class="t" style="left:1716.10px;top:123.00px;height:15px;line-height:15px;font-size:11.62px;color:#48484d;transform:scaleX(1.0228);transform-origin:0 50%;">Transition</div>
<div class="t" style="left:1793.70px;top:123.00px;height:15px;line-height:15px;font-size:11.62px;color:#48484d;transform:scaleX(1.0161);transform-origin:0 50%;">Image</div>
<div class="t" style="left:1864.80px;top:123.00px;height:15px;line-height:15px;font-size:11.62px;color:#d8d8d8;transform:scaleX(0.9563);transform-origin:0 50%;">File</div>
<div class="t" style="left:1578.70px;top:157.00px;height:16px;line-height:16px;font-size:12.56px;color:#ffffff;transform:scaleX(1.1133);transform-origin:0 50%;">Generator</div>
<div class="t" style="left:1785.00px;top:157.00px;height:16px;line-height:16px;font-size:12.56px;color:#929292;transform:scaleX(1.0828);transform-origin:0 50%;">Settings</div>
<div class="t" style="left:1514.80px;top:194.00px;height:16px;line-height:16px;font-size:12.56px;color:#ffffff;transform:scaleX(1.1097);transform-origin:0 50%;">Generator</div>
<div class="t" style="left:1586.40px;top:223.70px;height:15px;line-height:15px;font-size:11.16px;color:#acacac;transform:scaleX(1.0061);transform-origin:0 50%;">Center X</div>
<div class="t" style="left:1788.90px;top:223.50px;height:16px;line-height:16px;font-size:12.09px;color:#ffffff;transform:scaleX(1.1113);transform-origin:0 50%;">0.000</div>
<div class="t" style="left:1586.40px;top:248.60px;height:15px;line-height:15px;font-size:11.16px;color:#acacac;transform:scaleX(1.0108);transform-origin:0 50%;">Center Y</div>
<div class="t" style="left:1788.90px;top:248.40px;height:16px;line-height:16px;font-size:12.09px;color:#ffffff;transform:scaleX(1.1113);transform-origin:0 50%;">0.000</div>
<div class="t" style="left:1545.00px;top:273.60px;height:15px;line-height:15px;font-size:11.16px;color:#acacac;transform:scaleX(1.0469);transform-origin:0 50%;">Upper Left Color</div>
<div class="t" style="left:1538.20px;top:298.60px;height:15px;line-height:15px;font-size:11.16px;color:#ffffff;transform:scaleX(1.0359);transform-origin:0 50%;">Upper Right Color</div>
<div class="t" style="left:1545.40px;top:323.50px;height:15px;line-height:15px;font-size:11.16px;color:#acacac;transform:scaleX(1.0420);transform-origin:0 50%;">Lower Left Color</div>
<div class="t" style="left:1538.90px;top:348.50px;height:15px;line-height:15px;font-size:11.16px;color:#acacac;transform:scaleX(1.0280);transform-origin:0 50%;">Lower Right Color</div>
<div class="t" style="left:1842.30px;top:493.70px;height:15px;line-height:15px;font-size:11.16px;color:#b0b0b0;transform:scaleX(1.1490);transform-origin:0 50%;">DIM</div>
<div class="t" style="left:519.70px;top:534.20px;height:27px;line-height:27px;font-size:21px;color:#dcdcdc;-webkit-text-stroke:0.8px #dcdcdc;transform:scaleX(1.0258);transform-origin:0 50%;">00:00:00:00</div>
<div class="t" style="left:698.90px;top:538.90px;height:14px;line-height:14px;font-size:10.7px;color:#a4a4a4;transform:scaleX(1.0236);transform-origin:0 50%;">00:00:00:00</div>
<div class="t" style="left:956.40px;top:538.90px;height:14px;line-height:14px;font-size:10.7px;color:#a4a4a4;transform:scaleX(1.0236);transform-origin:0 50%;">00:00:08:00</div>
<div class="t" style="left:1213.90px;top:538.90px;height:14px;line-height:14px;font-size:10.7px;color:#a4a4a4;transform:scaleX(1.0236);transform-origin:0 50%;">00:00:16:00</div>
<div class="t" style="left:1471.40px;top:538.90px;height:14px;line-height:14px;font-size:10.7px;color:#a4a4a4;transform:scaleX(1.0236);transform-origin:0 50%;">00:00:24:00</div>
<div class="t" style="left:1728.90px;top:538.90px;height:14px;line-height:14px;font-size:10.7px;color:#a4a4a4;transform:scaleX(1.0236);transform-origin:0 50%;">00:00:32:00</div>
<div class="t" style="left:497.50px;top:695.00px;height:16px;line-height:16px;font-size:12.09px;color:#ffffff;transform:scaleX(1.0148);transform-origin:0 50%;">V1</div>
<div class="t" style="left:533.70px;top:695.00px;height:16px;line-height:16px;font-size:12.56px;color:#ffffff;transform:scaleX(1.0537);transform-origin:0 50%;">Video 1</div>
<div class="t" style="left:495.00px;top:748.00px;height:16px;line-height:16px;font-size:12.56px;color:#8a8a8a;transform:scaleX(1.0568);transform-origin:0 50%;">1 Clip</div>
<div class="t" style="left:497.50px;top:784.40px;height:16px;line-height:16px;font-size:12.56px;color:#ffffff;-webkit-text-stroke:0.4px #ffffff;transform:scaleX(1.0482);transform-origin:0 50%;">A1</div>
<div class="t" style="left:533.70px;top:784.00px;height:16px;line-height:16px;font-size:12.56px;color:#ffffff;transform:scaleX(1.0667);transform-origin:0 50%;">Audio 1</div>
<div class="t" style="left:667.80px;top:784.70px;height:15px;line-height:15px;font-size:11.16px;color:#707075;transform:scaleX(1.0506);transform-origin:0 50%;">2.0</div>
<div class="t" style="left:597.30px;top:814.40px;height:14px;line-height:14px;font-size:10.7px;color:#8a8a8a;transform:scaleX(1.0363);transform-origin:0 50%;">S</div>
<div class="t" style="left:625.10px;top:814.40px;height:14px;line-height:14px;font-size:10.7px;color:#8a8a8a;transform:scaleX(1.1004);transform-origin:0 50%;">M</div>
<div class="t" style="left:698.10px;top:756.40px;height:14px;line-height:14px;font-size:10.7px;color:#ffffff;transform:scaleX(1.0810);transform-origin:0 50%;">Four Color Gradient</div>
<div style="left:151px;top:968px;width:300px;height:16px;background:linear-gradient(180deg, rgba(40,40,46,0) 0%, rgba(40,40,46,0.9) 100%);"></div>
<div style="left:1631px;top:289px;width:59px;height:34.5px;background:#28282e;border:3px solid #b7d72a;box-sizing:border-box;"></div>
<div style="left:692.5px;top:538px;width:2px;height:435px;background:#e64b3d;"></div>
<svg style="left:685px;top:527px;" width="17" height="13.5" viewBox="0 0 17 13.5"><path d="M0.4 1.6A1.4 1.4 0 0 1 1.8 0.2H15.2A1.4 1.4 0 0 1 16.6 1.6V6.4L8.5 13.2L0.4 6.4Z" fill="#e64b3d"/></svg>
<div style="left:1640px;top:296.4px;width:39.2px;height:19.8px;background:#00ffff;border:1px solid #050506;box-sizing:border-box;border-radius:2.5px;"></div>
<div style="left:0px;top:984px;width:1920px;height:49px;background:#19191c;"></div>
<div style="left:0px;top:984px;width:1920px;height:1px;background:#0d0d0f;"></div>
<div style="left:0px;top:1032px;width:1920px;height:1px;background:#dfe3c8;"></div>
<svg style="left:45.5px;top:999.5px;" width="19" height="18.5" viewBox="0 0 19 18.5"><circle cx="9.5" cy="4.6" r="4.2" fill="#fff"/><circle cx="4.6" cy="13.6" r="4.2" fill="#fff"/><circle cx="14.4" cy="13.6" r="4.2" fill="#fff"/></svg>
<div style="left:781px;top:985px;width:118px;height:47px;background:#000;"></div>
<div style="left:781px;top:1030px;width:118px;height:2px;background:#e64b3d;"></div>
<svg style="left:591.5px;top:992px;" width="19" height="16.5" viewBox="0 0 19 16.5"><path d="M3.4 0.8H15.6M2 2.8H17" stroke="#55555a" stroke-width="1" fill="none" stroke-linecap="round" stroke-linejoin="round" /><rect x="0.7" y="4.8" width="17.6" height="11" rx="1" fill="none" stroke="#6a6a6f" stroke-width="1.2"/><circle cx="4.6" cy="8.4" r="1.1" fill="#6a6a6f"/><path d="M3 14.2L7.2 10.2L9.4 12.2L12.8 9L16 14.2Z" fill="#6a6a6f"/></svg>
<svg style="left:707.5px;top:991px;" width="26" height="18" viewBox="0 0 26 18"><path d="M15.4 1L12.6 17" stroke="#9a9a9a" stroke-width="1.4" fill="none" stroke-linecap="round" stroke-linejoin="round" /><path d="M8.6 3.4H14M16.4 3.4H22.4C24 3.4 24.4 4 24.2 5.2L23 12.6C22.8 13.8 22.2 14.4 21 14.4H15.2M12.4 14.4H6.6" stroke="#6a6a6f" stroke-width="1.3" fill="none" stroke-linecap="round" stroke-linejoin="round" /><path d="M9.6 3.4L8 14.4" stroke="#6a6a6f" stroke-width="1.3" fill="none" stroke-linecap="round" stroke-linejoin="round" /><path d="M2.2 6.2H7.6M0.8 9H6.6M2.8 11.8H6.4" stroke="#6a6a6f" stroke-width="1.1" fill="none" stroke-linecap="round" stroke-linejoin="round" /><circle cx="18.4" cy="6.4" r="0.8" fill="#6a6a6f"/><circle cx="17.6" cy="11.4" r="0.8" fill="#6a6a6f"/></svg>
<svg style="left:829.5px;top:990.5px;" width="23.5" height="19" viewBox="0 0 23.5 19"><rect x="0.4" y="4.6" width="9" height="2.6" rx="1.2" fill="#4a90d8"/><rect x="13.6" y="4.6" width="9" height="2.6" rx="1.2" fill="#4a90d8"/><rect x="2.6" y="8.8" width="7" height="2.6" rx="1.2" fill="#4a90d8"/><rect x="13.6" y="8.8" width="7" height="2.6" rx="1.2" fill="#4a90d8"/><rect x="0.4" y="13.2" width="9" height="2.6" rx="1.2" fill="#3fa24a"/><rect x="13.6" y="13.2" width="9" height="2.6" rx="1.2" fill="#3fa24a"/><path d="M11.6 2V18.6" stroke="#e64b3d" stroke-width="1.2"/><circle cx="11.6" cy="1.6" r="1.3" fill="#e64b3d"/></svg>
<svg style="left:950px;top:990.5px;" width="22" height="19" viewBox="0 0 22 19"><path d="M11.4 16.6L17.6 4.2" stroke="#8a8a8f" stroke-width="3.4" stroke-linecap="round"/><path d="M10.6 0.3999999999999999L11.304 1.896L12.8 2.6L11.304 3.3040000000000003L10.6 4.800000000000001L9.895999999999999 3.3040000000000003L8.399999999999999 2.6L9.895999999999999 1.896Z" fill="#6a6a6f"/><path d="M5.4 3.8L5.976000000000001 5.023999999999999L7.2 5.6L5.976000000000001 6.176L5.4 7.3999999999999995L4.824 6.176L3.6000000000000005 5.6L4.824 5.023999999999999Z" fill="#6a6a6f"/><path d="M7.4 8.8L7.912000000000001 9.888L9.0 10.4L7.912000000000001 10.912L7.4 12.0L6.888 10.912L5.800000000000001 10.4L6.888 9.888Z" fill="#6a6a6f"/><path d="M2 8.200000000000001L2.384 9.016L3.2 9.4L2.384 9.784L2 10.6L1.616 9.784L0.8 9.4L1.616 9.016Z" fill="#44444a"/><path d="M1 12.6L6 16.6L9.6 12.8" stroke="#3a3a40" stroke-width="1.6" fill="none"/></svg>
<svg style="left:1071.5px;top:992px;" width="17" height="17" viewBox="0 0 17 17"><circle cx="8.50" cy="1.70" r="1.5" fill="#8a8a8f"/><circle cx="12.50" cy="3.00" r="1.5" fill="#7c7c81"/><circle cx="14.97" cy="6.40" r="1.5" fill="#6e6e73"/><circle cx="14.97" cy="10.60" r="1.5" fill="#606065"/><circle cx="12.50" cy="14.00" r="1.5" fill="#55555a"/><circle cx="8.50" cy="15.30" r="1.5" fill="#4a4a4f"/><circle cx="4.50" cy="14.00" r="1.5" fill="#55555a"/><circle cx="2.03" cy="10.60" r="1.5" fill="#606065"/><circle cx="2.03" cy="6.40" r="1.5" fill="#6e6e73"/><circle cx="4.50" cy="3.00" r="1.5" fill="#7c7c81"/><circle cx="8.5" cy="8.5" r="1.2" fill="#55555a"/></svg>
<svg style="left:1193.5px;top:992px;" width="16" height="16" viewBox="0 0 16 16"><ellipse cx="3.2" cy="12.8" rx="2.9" ry="2.3" fill="#6a6a6f"/><ellipse cx="11.8" cy="10.8" rx="2.9" ry="2.3" fill="#6a6a6f"/><path d="M5.4 12.6V3.4L14 1.2V10.8" stroke="#6a6a6f" stroke-width="1.4" fill="none" stroke-linecap="round" stroke-linejoin="round" /><path d="M5.4 5.2L14 3" stroke="#6a6a6f" stroke-width="2.4" fill="none" stroke-linecap="round" stroke-linejoin="round" /></svg>
<svg style="left:1312px;top:991.5px;" width="18" height="18" viewBox="0 0 18 18"><path d="M16.6 1.2C12 1.2 8.2 3.6 5.8 8.2L9.6 12C14.2 9.6 16.6 5.8 16.6 1.2Z" stroke="#6a6a6f" stroke-width="1.2" fill="none" stroke-linecap="round" stroke-linejoin="round" /><circle cx="11.8" cy="6" r="1.6" fill="none" stroke="#6a6a6f" stroke-width="1.1"/><path d="M6.4 7.4L2.6 8L1 10.2L4.6 10.4M10.4 11.4L9.8 15.2L7.6 16.8L7.4 13.2" stroke="#6a6a6f" stroke-width="1.1" fill="none" stroke-linecap="round" stroke-linejoin="round" /><path d="M4.4 12L1.6 16.2L5.8 13.4" stroke="#6a6a6f" stroke-width="1.1" fill="none" stroke-linecap="round" stroke-linejoin="round" /></svg>
<svg style="left:1828.8px;top:1001.6px;" width="15.4" height="13.8" viewBox="0 0 15.4 13.8"><path d="M7.7 0.2L15.2 7.2H13.2V13.6H9.2V9H6.2V13.6H2.2V7.2H0.2Z" fill="#8c8c8c"/></svg>
<svg style="left:1877.7px;top:1000.8px;" width="15.4" height="15.4" viewBox="0 0 15.4 15.4"><path d="M6.13 2.64L6.93 0.04L8.47 0.04L9.27 2.64L10.17 3.01L12.57 1.74L13.66 2.83L12.39 5.23L12.76 6.13L15.36 6.93L15.36 8.47L12.76 9.27L12.39 10.17L13.66 12.57L12.57 13.66L10.17 12.39L9.27 12.76L8.47 15.36L6.93 15.36L6.13 12.76L5.23 12.39L2.83 13.66L1.74 12.57L3.01 10.17L2.64 9.27L0.04 8.47L0.04 6.93L2.64 6.13L3.01 5.23L1.74 2.83L2.83 1.74L5.23 3.01ZM7.7 4.7a3 3 0 1 0 0.001 0Z" fill="#8c8c8c" fill-rule="evenodd"/></svg>
<div class="t" style="left:71.90px;top:1001.90px;height:16px;line-height:16px;font-size:12.56px;color:#ffffff;-webkit-text-stroke:0.4px #ffffff;transform:scaleX(1.1129);transform-origin:0 50%;">DaVinci Resolve 20</div>
<div class="t" style="left:580.80px;top:1012.40px;height:16px;line-height:16px;font-size:12.56px;color:#929292;transform:scaleX(1.1115);transform-origin:0 50%;">Media</div>
<div class="t" style="left:709.10px;top:1012.40px;height:16px;line-height:16px;font-size:12.56px;color:#929292;transform:scaleX(1.1264);transform-origin:0 50%;">Cut</div>
<div class="t" style="left:827.80px;top:1012.40px;height:16px;line-height:16px;font-size:12.56px;color:#ffffff;-webkit-text-stroke:0.4px #ffffff;transform:scaleX(1.1237);transform-origin:0 50%;">Edit</div>
<div class="t" style="left:939.50px;top:1012.40px;height:16px;line-height:16px;font-size:12.56px;color:#929292;transform:scaleX(1.0724);transform-origin:0 50%;">Fusion</div>
<div class="t" style="left:1063.10px;top:1012.40px;height:16px;line-height:16px;font-size:12.56px;color:#929292;transform:scaleX(1.1139);transform-origin:0 50%;">Color</div>
<div class="t" style="left:1175.50px;top:1012.40px;height:16px;line-height:16px;font-size:12.56px;color:#929292;transform:scaleX(1.1048);transform-origin:0 50%;">Fairlight</div>
<div class="t" style="left:1298.50px;top:1012.40px;height:16px;line-height:16px;font-size:12.56px;color:#929292;transform:scaleX(1.1089);transform-origin:0 50%;">Deliver</div>
<div style="left:1116.5px;top:417px;width:566.5px;height:424px;background:#28282e;border-radius:8px;box-shadow:0 0 0 1px rgba(74,74,82,0.9),0 10px 36px 4px rgba(0,0,0,0.5);overflow:hidden;"><div style="left:0;top:0;width:100%;height:30px;background:#f3f3f8"></div></div>
<svg style="left:1127px;top:425px;" width="12" height="12" viewBox="0 0 12 12"><rect x="0.3" y="0.3" width="11.4" height="11.4" rx="2.4" fill="#22344d" stroke="#5a6a80" stroke-width="0.6"/><circle cx="6" cy="3.9" r="1.7" fill="#19c3f2"/><circle cx="3.8" cy="7.6" r="1.7" fill="#e0dc30"/><circle cx="8.2" cy="7.6" r="1.7" fill="#e8473a"/></svg>
<svg style="left:1662.5px;top:426.2px;" width="11" height="11" viewBox="0 0 11 11"><path d="M0.5 0.5L10.5 10.5M10.5 0.5L0.5 10.5" stroke="#1a1a1a" stroke-width="1.1" fill="none"/></svg>
<div style="left:1133px;top:486.5px;width:20px;height:16px;background:#101012;"></div>
<div style="left:1133px;top:486.5px;width:19px;height:15px;background:rgb(0,0,0);"></div>
<div style="left:1133px;top:510.5px;width:20px;height:16px;background:#101012;"></div>
<div style="left:1133px;top:510.5px;width:19px;height:15px;background:rgb(0,0,127);"></div>
<div style="left:1133px;top:534.5px;width:20px;height:16px;background:#101012;"></div>
<div style="left:1133px;top:534.5px;width:19px;height:15px;background:rgb(0,0,255);"></div>
<div style="left:1133px;top:558.5px;width:20px;height:16px;background:#101012;"></div>
<div style="left:1133px;top:558.5px;width:19px;height:15px;background:rgb(85,0,0);"></div>
<div style="left:1133px;top:582.5px;width:20px;height:16px;background:#101012;"></div>
<div style="left:1133px;top:582.5px;width:19px;height:15px;background:rgb(85,0,127);"></div>
<div style="left:1133px;top:606.5px;width:20px;height:16px;background:#101012;"></div>
<div style="left:1133px;top:606.5px;width:19px;height:15px;background:rgb(85,0,255);"></div>
<div style="left:1161px;top:486.5px;width:20px;height:16px;background:#101012;"></div>
<div style="left:1161px;top:486.5px;width:19px;height:15px;background:rgb(170,0,0);"></div>
<div style="left:1161px;top:510.5px;width:20px;height:16px;background:#101012;"></div>
<div style="left:1161px;top:510.5px;width:19px;height:15px;background:rgb(170,0,127);"></div>
<div style="left:1161px;top:534.5px;width:20px;height:16px;background:#101012;"></div>
<div style="left:1161px;top:534.5px;width:19px;height:15px;background:rgb(170,0,255);"></div>
<div style="left:1161px;top:558.5px;width:20px;height:16px;background:#101012;"></div>
<div style="left:1161px;top:558.5px;width:19px;height:15px;background:rgb(255,0,0);"></div>
<div style="left:1161px;top:582.5px;width:20px;height:16px;background:#101012;"></div>
<div style="left:1161px;top:582.5px;width:19px;height:15px;background:rgb(255,0,127);"></div>
<div style="left:1161px;top:606.5px;width:20px;height:16px;background:#101012;"></div>
<div style="left:1161px;top:606.5px;width:19px;height:15px;background:rgb(255,0,255);"></div>
<div style="left:1189px;top:486.5px;width:20px;height:16px;background:#101012;"></div>
<div style="left:1189px;top:486.5px;width:19px;height:15px;background:rgb(0,85,0);"></div>
<div style="left:1189px;top:510.5px;width:20px;height:16px;background:#101012;"></div>
<div style="left:1189px;top:510.5px;width:19px;height:15px;background:rgb(0,85,127);"></div>
<div style="left:1189px;top:534.5px;width:20px;height:16px;background:#101012;"></div>
<div style="left:1189px;top:534.5px;width:19px;height:15px;background:rgb(0,85,255);"></div>
<div style="left:1189px;top:558.5px;width:20px;height:16px;background:#101012;"></div>
<div style="left:1189px;top:558.5px;width:19px;height:15px;background:rgb(85,85,0);"></div>
<div style="left:1189px;top:582.5px;width:20px;height:16px;background:#101012;"></div>
<div style="left:1189px;top:582.5px;width:19px;height:15px;background:rgb(85,85,127);"></div>
<div style="left:1189px;top:606.5px;width:20px;height:16px;background:#101012;"></div>
<div style="left:1189px;top:606.5px;width:19px;height:15px;background:rgb(85,85,255);"></div>
<div style="left:1217px;top:486.5px;width:20px;height:16px;background:#101012;"></div>
<div style="left:1217px;top:486.5px;width:19px;height:15px;background:rgb(170,85,0);"></div>
<div style="left:1217px;top:510.5px;width:20px;height:16px;background:#101012;"></div>
<div style="left:1217px;top:510.5px;width:19px;height:15px;background:rgb(170,85,127);"></div>
<div style="left:1217px;top:534.5px;width:20px;height:16px;background:#101012;"></div>
<div style="left:1217px;top:534.5px;width:19px;height:15px;background:rgb(170,85,255);"></div>
<div style="left:1217px;top:558.5px;width:20px;height:16px;background:#101012;"></div>
<div style="left:1217px;top:558.5px;width:19px;height:15px;background:rgb(255,85,0);"></div>
<div style="left:1217px;top:582.5px;width:20px;height:16px;background:#101012;"></div>
<div style="left:1217px;top:582.5px;width:19px;height:15px;background:rgb(255,85,127);"></div>
<div style="left:1217px;top:606.5px;width:20px;height:16px;background:#101012;"></div>
<div style="left:1217px;top:606.5px;width:19px;height:15px;background:rgb(255,85,255);"></div>
<div style="left:1245px;top:486.5px;width:20px;height:16px;background:#101012;"></div>
<div style="left:1245px;top:486.5px;width:19px;height:15px;background:rgb(0,170,0);"></div>
<div style="left:1245px;top:510.5px;width:20px;height:16px;background:#101012;"></div>
<div style="left:1245px;top:510.5px;width:19px;height:15px;background:rgb(0,170,127);"></div>
<div style="left:1245px;top:534.5px;width:20px;height:16px;background:#101012;"></div>
<div style="left:1245px;top:534.5px;width:19px;height:15px;background:rgb(0,170,255);"></div>
<div style="left:1245px;top:558.5px;width:20px;height:16px;background:#101012;"></div>
<div style="left:1245px;top:558.5px;width:19px;height:15px;background:rgb(85,170,0);"></div>
<div style="left:1245px;top:582.5px;width:20px;height:16px;background:#101012;"></div>
<div style="left:1245px;top:582.5px;width:19px;height:15px;background:rgb(85,170,127);"></div>
<div style="left:1245px;top:606.5px;width:20px;height:16px;background:#101012;"></div>
<div style="left:1245px;top:606.5px;width:19px;height:15px;background:rgb(85,170,255);"></div>
<div style="left:1273px;top:486.5px;width:20px;height:16px;background:#101012;"></div>
<div style="left:1273px;top:486.5px;width:19px;height:15px;background:rgb(170,170,0);"></div>
<div style="left:1273px;top:510.5px;width:20px;height:16px;background:#101012;"></div>
<div style="left:1273px;top:510.5px;width:19px;height:15px;background:rgb(170,170,127);"></div>
<div style="left:1273px;top:534.5px;width:20px;height:16px;background:#101012;"></div>
<div style="left:1273px;top:534.5px;width:19px;height:15px;background:rgb(170,170,255);"></div>
<div style="left:1273px;top:558.5px;width:20px;height:16px;background:#101012;"></div>
<div style="left:1273px;top:558.5px;width:19px;height:15px;background:rgb(255,170,0);"></div>
<div style="left:1273px;top:582.5px;width:20px;height:16px;background:#101012;"></div>
<div style="left:1273px;top:582.5px;width:19px;height:15px;background:rgb(255,170,127);"></div>
<div style="left:1273px;top:606.5px;width:20px;height:16px;background:#101012;"></div>
<div style="left:1273px;top:606.5px;width:19px;height:15px;background:rgb(255,170,255);"></div>
<div style="left:1301px;top:486.5px;width:20px;height:16px;background:#101012;"></div>
<div style="left:1301px;top:486.5px;width:19px;height:15px;background:rgb(0,255,0);"></div>
<div style="left:1301px;top:510.5px;width:20px;height:16px;background:#101012;"></div>
<div style="left:1301px;top:510.5px;width:19px;height:15px;background:rgb(0,255,127);"></div>
<div style="left:1301px;top:534.5px;width:20px;height:16px;background:#101012;"></div>
<div style="left:1301px;top:534.5px;width:19px;height:15px;background:rgb(0,255,255);"></div>
<div style="left:1301px;top:558.5px;width:20px;height:16px;background:#101012;"></div>
<div style="left:1301px;top:558.5px;width:19px;height:15px;background:rgb(85,255,0);"></div>
<div style="left:1301px;top:582.5px;width:20px;height:16px;background:#101012;"></div>
<div style="left:1301px;top:582.5px;width:19px;height:15px;background:rgb(85,255,127);"></div>
<div style="left:1301px;top:606.5px;width:20px;height:16px;background:#101012;"></div>
<div style="left:1301px;top:606.5px;width:19px;height:15px;background:rgb(85,255,255);"></div>
<div style="left:1329px;top:486.5px;width:20px;height:16px;background:#101012;"></div>
<div style="left:1329px;top:486.5px;width:19px;height:15px;background:rgb(170,255,0);"></div>
<div style="left:1329px;top:510.5px;width:20px;height:16px;background:#101012;"></div>
<div style="left:1329px;top:510.5px;width:19px;height:15px;background:rgb(170,255,127);"></div>
<div style="left:1329px;top:534.5px;width:20px;height:16px;background:#101012;"></div>
<div style="left:1329px;top:534.5px;width:19px;height:15px;background:rgb(170,255,255);"></div>
<div style="left:1329px;top:558.5px;width:20px;height:16px;background:#101012;"></div>
<div style="left:1329px;top:558.5px;width:19px;height:15px;background:rgb(255,255,0);"></div>
<div style="left:1329px;top:582.5px;width:20px;height:16px;background:#101012;"></div>
<div style="left:1329px;top:582.5px;width:19px;height:15px;background:rgb(255,255,127);"></div>
<div style="left:1329px;top:606.5px;width:20px;height:16px;background:#101012;"></div>
<div style="left:1329px;top:606.5px;width:19px;height:15px;background:rgb(255,255,255);"></div>
<div style="left:1291.3px;top:528px;width:36px;height:28px;border:3px solid #b7d72a;box-sizing:border-box;"></div>
<div style="left:1128px;top:632px;width:223.5px;height:19.5px;border:1px solid #45454b;box-sizing:border-box;border-radius:9.75px;"></div>
<div style="left:1364.5px;top:467px;width:220.6px;height:201px;background:linear-gradient(180deg, rgba(200,200,200,0) 0%, rgba(200,200,200,1) 100%), linear-gradient(90deg, rgb(200,0,0) 0%, rgb(200,0,200) 16.667%, rgb(0,0,200) 33.333%, rgb(0,200,200) 50%, rgb(0,200,0) 66.667%, rgb(200,200,0) 83.333%, rgb(200,0,0) 100%);"></div>
<div style="left:1465px;top:467.5px;width:20px;height:2px;background:#000;"></div>
<div style="left:1474px;top:467.5px;width:2px;height:11.5px;background:#000;"></div>
<div style="left:1602px;top:467px;width:15px;height:201px;background:linear-gradient(180deg,#00ffff 0%,#000000 100%);border:1px solid #141417;box-sizing:border-box;"></div>
<svg style="left:1617.2px;top:463.6px;" width="5.4" height="10" viewBox="0 0 5.4 10"><path d="M0 5L5.2 0V10Z" fill="#9a9a9a"/></svg>
<div style="left:1133px;top:728.3px;width:20px;height:16px;background:#101012;"></div>
<div style="left:1133px;top:728.3px;width:19px;height:15px;background:#ffffff;"></div>
<div style="left:1133px;top:752.3px;width:20px;height:16px;background:#101012;"></div>
<div style="left:1133px;top:752.3px;width:19px;height:15px;background:#ffffff;"></div>
<div style="left:1161px;top:728.3px;width:20px;height:16px;background:#101012;"></div>
<div style="left:1161px;top:728.3px;width:19px;height:15px;background:#ffffff;"></div>
<div style="left:1161px;top:752.3px;width:20px;height:16px;background:#101012;"></div>
<div style="left:1161px;top:752.3px;width:19px;height:15px;background:#ffffff;"></div>
<div style="left:1189px;top:728.3px;width:20px;height:16px;background:#101012;"></div>
<div style="left:1189px;top:728.3px;width:19px;height:15px;background:#ffffff;"></div>
<div style="left:1189px;top:752.3px;width:20px;height:16px;background:#101012;"></div>
<div style="left:1189px;top:752.3px;width:19px;height:15px;background:#ffffff;"></div>
<div style="left:1217px;top:728.3px;width:20px;height:16px;background:#101012;"></div>
<div style="left:1217px;top:728.3px;width:19px;height:15px;background:#ffffff;"></div>
<div style="left:1217px;top:752.3px;width:20px;height:16px;background:#101012;"></div>
<div style="left:1217px;top:752.3px;width:19px;height:15px;background:#ffffff;"></div>
<div style="left:1245px;top:728.3px;width:20px;height:16px;background:#101012;"></div>
<div style="left:1245px;top:728.3px;width:19px;height:15px;background:#ffffff;"></div>
<div style="left:1245px;top:752.3px;width:20px;height:16px;background:#101012;"></div>
<div style="left:1245px;top:752.3px;width:19px;height:15px;background:#ffffff;"></div>
<div style="left:1273px;top:728.3px;width:20px;height:16px;background:#101012;"></div>
<div style="left:1273px;top:728.3px;width:19px;height:15px;background:#ffffff;"></div>
<div style="left:1273px;top:752.3px;width:20px;height:16px;background:#101012;"></div>
<div style="left:1273px;top:752.3px;width:19px;height:15px;background:#ffffff;"></div>
<div style="left:1301px;top:728.3px;width:20px;height:16px;background:#101012;"></div>
<div style="left:1301px;top:728.3px;width:19px;height:15px;background:#ffffff;"></div>
<div style="left:1301px;top:752.3px;width:20px;height:16px;background:#101012;"></div>
<div style="left:1301px;top:752.3px;width:19px;height:15px;background:#ffffff;"></div>
<div style="left:1329px;top:728.3px;width:20px;height:16px;background:#101012;"></div>
<div style="left:1329px;top:728.3px;width:19px;height:15px;background:#ffffff;"></div>
<div style="left:1329px;top:752.3px;width:20px;height:16px;background:#101012;"></div>
<div style="left:1329px;top:752.3px;width:19px;height:15px;background:#ffffff;"></div>
<div style="left:1128px;top:778px;width:223.5px;height:19.5px;border:1px solid #45454b;box-sizing:border-box;border-radius:9.75px;"></div>
<div style="left:1364.5px;top:695px;width:58.8px;height:102.2px;background:#00ffff;"></div>
<div style="left:1475px;top:694.4px;width:69px;height:19.5px;background:#1a1a1c;border:1px solid #0e0e10;box-sizing:border-box;border-radius:3px;"></div>
<svg style="left:1526.5px;top:697.0px;" width="8" height="14.5" viewBox="0 0 8 14.5"><path d="M0.6 4.6L4 1L7.4 4.6" stroke="#a0a0a0" stroke-width="1.2" fill="none" stroke-linecap="round" stroke-linejoin="round" /><path d="M0.6 9.8L4 13.4L7.4 9.8" stroke="#a0a0a0" stroke-width="1.2" fill="none" stroke-linecap="round" stroke-linejoin="round" /></svg>
<div style="left:1475px;top:720.3px;width:69px;height:19.5px;background:#1a1a1c;border:1px solid #0e0e10;box-sizing:border-box;border-radius:3px;"></div>
<svg style="left:1526.5px;top:722.9px;" width="8" height="14.5" viewBox="0 0 8 14.5"><path d="M0.6 4.6L4 1L7.4 4.6" stroke="#a0a0a0" stroke-width="1.2" fill="none" stroke-linecap="round" stroke-linejoin="round" /><path d="M0.6 9.8L4 13.4L7.4 9.8" stroke="#a0a0a0" stroke-width="1.2" fill="none" stroke-linecap="round" stroke-linejoin="round" /></svg>
<div style="left:1475px;top:746.4px;width:69px;height:19.5px;background:#1a1a1c;border:1px solid #0e0e10;box-sizing:border-box;border-radius:3px;"></div>
<svg style="left:1526.5px;top:749.0px;" width="8" height="14.5" viewBox="0 0 8 14.5"><path d="M0.6 4.6L4 1L7.4 4.6" stroke="#a0a0a0" stroke-width="1.2" fill="none" stroke-linecap="round" stroke-linejoin="round" /><path d="M0.6 9.8L4 13.4L7.4 9.8" stroke="#a0a0a0" stroke-width="1.2" fill="none" stroke-linecap="round" stroke-linejoin="round" /></svg>
<div style="left:1597px;top:694.4px;width:69px;height:19.5px;background:#1a1a1c;border:1px solid #0e0e10;box-sizing:border-box;border-radius:3px;"></div>
<svg style="left:1648.5px;top:697.0px;" width="8" height="14.5" viewBox="0 0 8 14.5"><path d="M0.6 4.6L4 1L7.4 4.6" stroke="#a0a0a0" stroke-width="1.2" fill="none" stroke-linecap="round" stroke-linejoin="round" /><path d="M0.6 9.8L4 13.4L7.4 9.8" stroke="#a0a0a0" stroke-width="1.2" fill="none" stroke-linecap="round" stroke-linejoin="round" /></svg>
<div style="left:1597px;top:720.3px;width:69px;height:19.5px;background:#1a1a1c;border:1px solid #0e0e10;box-sizing:border-box;border-radius:3px;"></div>
<svg style="left:1648.5px;top:722.9px;" width="8" height="14.5" viewBox="0 0 8 14.5"><path d="M0.6 4.6L4 1L7.4 4.6" stroke="#a0a0a0" stroke-width="1.2" fill="none" stroke-linecap="round" stroke-linejoin="round" /><path d="M0.6 9.8L4 13.4L7.4 9.8" stroke="#a0a0a0" stroke-width="1.2" fill="none" stroke-linecap="round" stroke-linejoin="round" /></svg>
<div style="left:1597px;top:746.4px;width:69px;height:19.5px;background:#1a1a1c;border:1px solid #0e0e10;box-sizing:border-box;border-radius:3px;"></div>
<svg style="left:1648.5px;top:749.0px;" width="8" height="14.5" viewBox="0 0 8 14.5"><path d="M0.6 4.6L4 1L7.4 4.6" stroke="#a0a0a0" stroke-width="1.2" fill="none" stroke-linecap="round" stroke-linejoin="round" /><path d="M0.6 9.8L4 13.4L7.4 9.8" stroke="#a0a0a0" stroke-width="1.2" fill="none" stroke-linecap="round" stroke-linejoin="round" /></svg>
<div style="left:1475px;top:778px;width:125px;height:20px;background:#1a1a1c;border:1px solid #0e0e10;box-sizing:border-box;border-radius:3px;"></div>
<div style="left:1446px;top:810px;width:110px;height:20px;border:1px solid #45454b;box-sizing:border-box;border-radius:10.0px;"></div>
<div style="left:1562px;top:810px;width:110px;height:20px;border:1px solid #e64b3d;box-sizing:border-box;border-radius:10.0px;"></div>
<div class="t" style="left:1146.40px;top:424.70px;height:15px;line-height:15px;font-size:11.16px;color:#1a1a1a;transform:scaleX(1.0598);transform-origin:0 50%;">Select Color</div>
<div class="t" style="left:1127.50px;top:459.90px;height:16px;line-height:16px;font-size:12.09px;color:#8e8e8e;transform:scaleX(1.1058);transform-origin:0 50%;">Basic colors</div>
<div class="t" style="left:1187.60px;top:635.05px;height:16px;line-height:16px;font-size:12.09px;color:#8e8e8e;transform:scaleX(1.0810);transform-origin:0 50%;">Pick Screen Color</div>
<div class="t" style="left:1127.50px;top:702.00px;height:16px;line-height:16px;font-size:12.09px;color:#8e8e8e;transform:scaleX(1.1362);transform-origin:0 50%;">Custom colors</div>
<div class="t" style="left:1173.50px;top:781.05px;height:16px;line-height:16px;font-size:12.09px;color:#8e8e8e;transform:scaleX(1.1256);transform-origin:0 50%;">Add to Custom Colors</div>
<div class="t" style="left:1440.80px;top:696.70px;height:16px;line-height:16px;font-size:12.09px;color:#8e8e8e;transform:scaleX(1.1091);transform-origin:0 50%;">Hue:</div>
<div class="t" style="left:1487.90px;top:697.30px;height:16px;line-height:16px;font-size:12.09px;color:#8e8e8e;transform:scaleX(1.1361);transform-origin:0 50%;">180</div>
<div class="t" style="left:1446.10px;top:722.60px;height:16px;line-height:16px;font-size:12.09px;color:#8e8e8e;transform:scaleX(1.0698);transform-origin:0 50%;">Sat:</div>
<div class="t" style="left:1487.90px;top:723.20px;height:16px;line-height:16px;font-size:12.09px;color:#8e8e8e;transform:scaleX(1.1361);transform-origin:0 50%;">255</div>
<div class="t" style="left:1447.00px;top:748.70px;height:16px;line-height:16px;font-size:12.09px;color:#8e8e8e;transform:scaleX(1.1093);transform-origin:0 50%;">Val:</div>
<div class="t" style="left:1487.90px;top:749.30px;height:16px;line-height:16px;font-size:12.09px;color:#8e8e8e;transform:scaleX(1.1361);transform-origin:0 50%;">255</div>
<div class="t" style="left:1564.20px;top:696.70px;height:16px;line-height:16px;font-size:12.09px;color:#8e8e8e;transform:scaleX(1.0543);transform-origin:0 50%;">Red:</div>
<div class="t" style="left:1609.80px;top:697.30px;height:16px;line-height:16px;font-size:12.09px;color:#8e8e8e;letter-spacing:0.092px;transform:scaleX(1.1600);transform-origin:0 50%;">0</div>
<div class="t" style="left:1550.10px;top:722.60px;height:16px;line-height:16px;font-size:12.09px;color:#8e8e8e;transform:scaleX(1.1100);transform-origin:0 50%;">Green:</div>
<div class="t" style="left:1609.80px;top:723.20px;height:16px;line-height:16px;font-size:12.09px;color:#8e8e8e;transform:scaleX(1.1361);transform-origin:0 50%;">255</div>
<div class="t" style="left:1560.50px;top:748.70px;height:16px;line-height:16px;font-size:12.09px;color:#8e8e8e;transform:scaleX(1.1115);transform-origin:0 50%;">Blue:</div>
<div class="t" style="left:1609.80px;top:749.30px;height:16px;line-height:16px;font-size:12.09px;color:#8e8e8e;transform:scaleX(1.1361);transform-origin:0 50%;">255</div>
<div class="t" style="left:1430.10px;top:781.40px;height:16px;line-height:16px;font-size:12.09px;color:#8e8e8e;transform:scaleX(1.0759);transform-origin:0 50%;">HTML:</div>
<div class="t" style="left:1477.50px;top:781.40px;height:16px;line-height:16px;font-size:12.09px;color:#8e8e8e;letter-spacing:0.445px;transform:scaleX(1.1600);transform-origin:0 50%;">#00ffff</div>
<div class="t" style="left:1480.50px;top:813.30px;height:16px;line-height:16px;font-size:12.09px;color:#8e8e8e;transform:scaleX(1.0795);transform-origin:0 50%;">Cancel</div>
<div class="t" style="left:1607.50px;top:813.30px;height:16px;line-height:16px;font-size:12.09px;color:#ffffff;transform:scaleX(1.0886);transform-origin:0 50%;">OK</div>
</div></body></html>
